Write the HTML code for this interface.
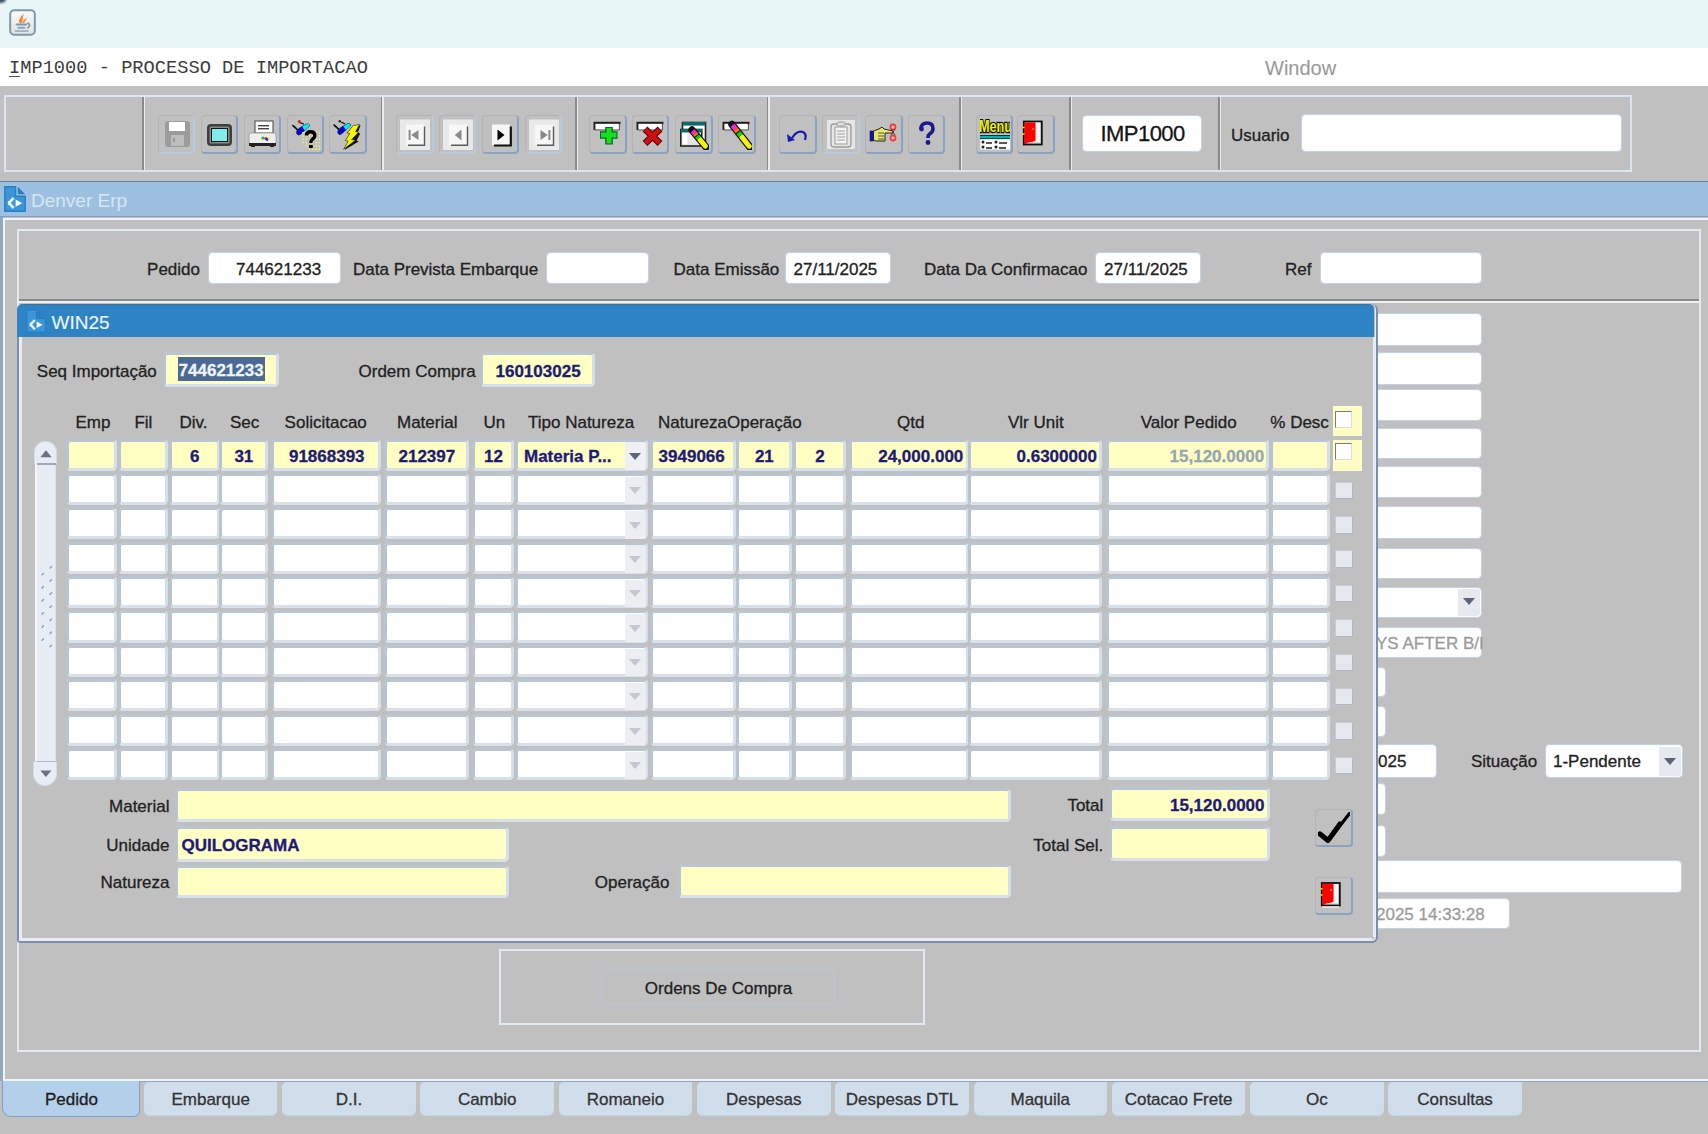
<!DOCTYPE html><html><head><meta charset="utf-8"><style>
html,body{margin:0;padding:0;width:1708px;height:1134px;overflow:hidden;background:#c0c0c0;position:relative}
.t{-webkit-text-stroke:0.3px currentColor}
</style></head><body>
<div style="position:absolute;left:0px;top:0px;width:1708px;height:48px;background:#e8f6f7"></div>
<div style="position:absolute;left:-5px;top:-5px;width:11px;height:7.5px;background:#3c5070;border-radius:50%;filter:blur(1px)"></div>
<svg style="position:absolute;left:9px;top:9px" width="27" height="27" viewBox="0 0 27 27">
<defs><linearGradient id="jg" x1="0" y1="0" x2="0" y2="1"><stop offset="0" stop-color="#fafafa"/><stop offset="1" stop-color="#e2e2e2"/></linearGradient></defs>
<rect x="1.2" y="1.2" width="24.6" height="24.6" rx="4" fill="url(#jg)" stroke="#7f97ab" stroke-width="2"/>
<path d="M11 14.5 C8.5 11 11.5 8 15 4.5 C13 8.5 14.5 10.5 12.5 14.5 Z" fill="#ee8a2e"/>
<path d="M13.5 14.3 C12.8 12 15.5 10.5 18 8.5 C17 11 17 12.5 14.5 14.3 Z" fill="#f09a40"/>
<rect x="6.5" y="14.6" width="11.7" height="1.9" rx="0.9" fill="#7d97ad"/>
<rect x="8.3" y="17.8" width="8.1" height="1.9" rx="0.9" fill="#8ca3b8"/>
<path d="M18.3 13.8 Q23 16.2 18.3 19.2" fill="none" stroke="#7d97ad" stroke-width="1.8"/>
<rect x="5.8" y="21.3" width="13.8" height="1.5" fill="#93a9bc"/>
</svg>
<div style="position:absolute;left:0px;top:48px;width:1708px;height:38px;background:#ffffff"></div>
<div class="t" style="position:absolute;left:9px;top:57.1px;height:22px;line-height:22px;font-family:'Liberation Mono', monospace;font-size:18.7px;color:#3c3c3c;font-weight:400;white-space:pre;-webkit-text-stroke:0">IMP1000 - PROCESSO DE IMPORTACAO</div>
<div style="position:absolute;left:9px;top:75.6px;width:10.5px;height:1.6px;background:#555"></div>
<div class="t" style="position:absolute;left:1265px;top:56.4px;height:24px;line-height:24px;font-family:'Liberation Sans', sans-serif;font-size:20px;color:#9a9a9a;font-weight:400;white-space:pre;-webkit-text-stroke:0.1px">Window</div>
<div style="position:absolute;left:4px;top:95px;width:1628px;height:77px;box-sizing:border-box;border:2px solid #dbe5ef;"></div>
<div style="position:absolute;left:142.3px;top:97px;width:1.6px;height:73px;background:#8a8a8a"></div>
<div style="position:absolute;left:143.9px;top:97px;width:1.4px;height:73px;background:#ececec"></div>
<div style="position:absolute;left:380.6px;top:97px;width:1.6px;height:73px;background:#8a8a8a"></div>
<div style="position:absolute;left:382.2px;top:97px;width:1.4px;height:73px;background:#ececec"></div>
<div style="position:absolute;left:575.0999999999999px;top:97px;width:1.6px;height:73px;background:#8a8a8a"></div>
<div style="position:absolute;left:576.6999999999999px;top:97px;width:1.4px;height:73px;background:#ececec"></div>
<div style="position:absolute;left:766.8px;top:97px;width:1.6px;height:73px;background:#8a8a8a"></div>
<div style="position:absolute;left:768.4px;top:97px;width:1.4px;height:73px;background:#ececec"></div>
<div style="position:absolute;left:959.0px;top:97px;width:1.6px;height:73px;background:#8a8a8a"></div>
<div style="position:absolute;left:960.6px;top:97px;width:1.4px;height:73px;background:#ececec"></div>
<div style="position:absolute;left:1069.1px;top:97px;width:1.6px;height:73px;background:#8a8a8a"></div>
<div style="position:absolute;left:1070.7px;top:97px;width:1.4px;height:73px;background:#ececec"></div>
<div style="position:absolute;left:1218.3999999999999px;top:97px;width:1.6px;height:73px;background:#8a8a8a"></div>
<div style="position:absolute;left:1220.0px;top:97px;width:1.4px;height:73px;background:#ececec"></div>
<div style="position:absolute;left:157.6px;top:114.5px;width:37.5px;height:39.5px;box-sizing:border-box;border-radius:4px;border-top:1.5px solid #b3b3b3;border-left:1.5px solid #b3b3b3;border-right:2px solid #b9c9dc;border-bottom:2px solid #b9c9dc;"></div>
<svg style="position:absolute;left:161.6px;top:118.5px" width="30" height="31" viewBox="0 0 30 31"><rect x="3" y="2" width="25" height="26" rx="3" fill="#9c9c9c"/>
<rect x="7" y="3" width="16" height="9" fill="#fff"/>
<rect x="9" y="16" width="13" height="11" fill="#bdbdbd"/>
<rect x="11" y="19" width="2" height="4" fill="#999"/></svg>
<div style="position:absolute;left:200.5px;top:114.5px;width:37.5px;height:39.5px;box-sizing:border-box;border-radius:4px;border-top:1.5px solid #b3b3b3;border-left:1.5px solid #b3b3b3;border-right:2px solid #8aa3c2;border-bottom:2px solid #8aa3c2;"></div>
<svg style="position:absolute;left:204.5px;top:118.5px" width="30" height="31" viewBox="0 0 30 31"><rect x="2" y="5" width="25" height="22" rx="4" fill="#3e3e3e"/>
<rect x="4.5" y="7.5" width="20" height="17" rx="1.5" fill="#8a8a8a"/>
<rect x="6" y="9" width="17" height="14" fill="#111"/>
<rect x="7" y="10" width="15" height="12" fill="#6ef6f6"/>
<path d="M7 13h15M7 16h15M7 19h15M10 10v12M13 10v12M16 10v12M19 10v12" stroke="#a8d8d8" stroke-width="0.6"/></svg>
<div style="position:absolute;left:243.5px;top:114.5px;width:37.5px;height:39.5px;box-sizing:border-box;border-radius:4px;border-top:1.5px solid #b3b3b3;border-left:1.5px solid #b3b3b3;border-right:2px solid #8aa3c2;border-bottom:2px solid #8aa3c2;"></div>
<svg style="position:absolute;left:247.5px;top:118.5px" width="30" height="31" viewBox="0 0 30 31"><rect x="7" y="2" width="18" height="12" fill="#fff" stroke="#444" stroke-width="1"/>
<rect x="10" y="6" width="11" height="1.4" fill="#444"/><rect x="10" y="9" width="11" height="1.4" fill="#444"/>
<rect x="1" y="14" width="27" height="11" rx="2" fill="#eeeeee" stroke="#999" stroke-width="0.8"/>
<rect x="1" y="24" width="27" height="3" fill="#222"/>
<rect x="3" y="26" width="4" height="2" fill="#222"/><rect x="22" y="26" width="4" height="2" fill="#222"/>
<circle cx="15" cy="19" r="1.6" fill="#19c319"/><circle cx="18" cy="19.5" r="1.6" fill="#e02020"/><circle cx="19" cy="20.5" r="1.4" fill="#2828ff"/><circle cx="21.5" cy="19.2" r="1.5" fill="#f0f060"/></svg>
<div style="position:absolute;left:286.5px;top:114.5px;width:37.5px;height:39.5px;box-sizing:border-box;border-radius:4px;border-top:1.5px solid #b3b3b3;border-left:1.5px solid #b3b3b3;border-right:2px solid #8aa3c2;border-bottom:2px solid #8aa3c2;"></div>
<svg style="position:absolute;left:290.5px;top:118.5px" width="30" height="31" viewBox="0 0 30 31"><g transform="translate(0.4,0.6)">
<path d="M1.6 6 L6.5 10.5" stroke="#111" stroke-width="1.8" stroke-linecap="round"/>
<path d="M8.5 3 L12.5 4.6" stroke="#222" stroke-width="1.4"/>
<path d="M5.6 14.2 C4.6 12.2 6.2 9.6 9 8 L14.6 4.8 C16.6 4 18.4 4.6 17.8 6.2 C17 7.8 15 9.4 12.6 11.2 L9.2 14.4 C7.6 15.6 6.4 15.6 5.6 14.2 Z" fill="#0000f0" stroke="#111" stroke-width="0.9"/>
<path d="M10.8 7 L14.6 4.8 C16.6 4 18.4 4.6 17.8 6.2 C17 7.8 15.2 9.2 13.2 10.8 Z" fill="#00f0f0"/>
</g><circle cx="8.4" cy="2.6" r="1.6" fill="#e02020"/>
<g fill="#f0f070"><circle cx="12.0" cy="13.6" r="0.85"/><circle cx="12.0" cy="16.9" r="0.85"/><circle cx="12.0" cy="20.2" r="0.85"/><circle cx="12.0" cy="23.5" r="0.85"/><circle cx="15.3" cy="13.6" r="0.85"/><circle cx="15.3" cy="16.9" r="0.85"/><circle cx="15.3" cy="20.2" r="0.85"/><circle cx="15.3" cy="23.5" r="0.85"/><circle cx="15.3" cy="26.8" r="0.85"/><circle cx="18.6" cy="13.6" r="0.85"/><circle cx="18.6" cy="16.9" r="0.85"/><circle cx="18.6" cy="20.2" r="0.85"/><circle cx="18.6" cy="23.5" r="0.85"/><circle cx="18.6" cy="26.8" r="0.85"/><circle cx="18.6" cy="30.1" r="0.85"/><circle cx="21.9" cy="13.6" r="0.85"/><circle cx="21.9" cy="16.9" r="0.85"/><circle cx="21.9" cy="20.2" r="0.85"/><circle cx="21.9" cy="23.5" r="0.85"/><circle cx="21.9" cy="26.8" r="0.85"/><circle cx="21.9" cy="30.1" r="0.85"/><circle cx="25.2" cy="13.6" r="0.85"/><circle cx="25.2" cy="16.9" r="0.85"/><circle cx="25.2" cy="20.2" r="0.85"/><circle cx="25.2" cy="23.5" r="0.85"/><circle cx="25.2" cy="26.8" r="0.85"/><circle cx="25.2" cy="30.1" r="0.85"/><circle cx="28.5" cy="13.6" r="0.85"/><circle cx="28.5" cy="16.9" r="0.85"/><circle cx="28.5" cy="20.2" r="0.85"/><circle cx="28.5" cy="23.5" r="0.85"/><circle cx="28.5" cy="26.8" r="0.85"/><circle cx="28.5" cy="30.1" r="0.85"/></g>
<path d="M15.5 16.6 Q15.5 12.8 19.6 12.8 Q23.8 12.8 23.8 16.6 Q23.8 19 21.2 20.4 Q19.8 21.4 19.8 24" fill="none" stroke="#000" stroke-width="3.4"/>
<rect x="18" y="26" width="3.8" height="3" fill="#000"/></svg>
<div style="position:absolute;left:329px;top:114.5px;width:37.5px;height:39.5px;box-sizing:border-box;border-radius:4px;border-top:1.5px solid #b3b3b3;border-left:1.5px solid #b3b3b3;border-right:2px solid #8aa3c2;border-bottom:2px solid #8aa3c2;"></div>
<svg style="position:absolute;left:333px;top:118.5px" width="30" height="31" viewBox="0 0 30 31"><g transform="translate(-0.4,0.2)">
<path d="M1.6 6 L6.5 10.5" stroke="#111" stroke-width="1.8" stroke-linecap="round"/>
<path d="M8.5 3 L12.5 4.6" stroke="#222" stroke-width="1.4"/>
<path d="M5.6 14.2 C4.6 12.2 6.2 9.6 9 8 L14.6 4.8 C16.6 4 18.4 4.6 17.8 6.2 C17 7.8 15 9.4 12.6 11.2 L9.2 14.4 C7.6 15.6 6.4 15.6 5.6 14.2 Z" fill="#0000f0" stroke="#111" stroke-width="0.9"/>
<path d="M10.8 7 L14.6 4.8 C16.6 4 18.4 4.6 17.8 6.2 C17 7.8 15.2 9.2 13.2 10.8 Z" fill="#00f0f0"/>
</g><circle cx="6.8" cy="2.2" r="1.2" fill="#222"/>
<path d="M27.6 6.2 L24.8 13.6 L27.2 14.4 L23.6 21.6 L25.6 22.4 L11.4 31 L17 22 L15 21.4 L19.2 14.6 L17.2 14 L20.5 7 Z" fill="#111"/><path d="M20.2 6.6 L26.6 5.4 L22.6 12.6 L25.6 13.2 L18.6 20.6 L22.4 21.2 L10.6 30.2 L15.2 22.2 L12.4 21.6 L16.8 14.6 L14 14 Z" fill="#f8f800" stroke="#333" stroke-width="0.7" stroke-linejoin="round"/></svg>
<div style="position:absolute;left:396px;top:114.5px;width:37.5px;height:39.5px;box-sizing:border-box;border-radius:4px;border-top:1.5px solid #b3b3b3;border-left:1.5px solid #b3b3b3;border-right:2px solid #b9c9dc;border-bottom:2px solid #b9c9dc;"></div>
<svg style="position:absolute;left:400px;top:118.5px" width="30" height="31" viewBox="0 0 30 31"><rect x="-0.5" y="0.5" width="31.5" height="31" fill="#e9e9e9"/><rect x="6" y="5.5" width="18" height="20.5" fill="#f7f7f7"/><path d="M8 26.3 H24.5 V7.5" stroke="#5a5a5a" stroke-width="1.4" fill="none"/><rect x="8.6" y="11" width="2" height="10" fill="#8a8a8a"/><path d="M18.5 11 L11.2 16 L18.5 21Z" fill="#8a8a8a"/></svg>
<div style="position:absolute;left:438.5px;top:114.5px;width:37.5px;height:39.5px;box-sizing:border-box;border-radius:4px;border-top:1.5px solid #b3b3b3;border-left:1.5px solid #b3b3b3;border-right:2px solid #b9c9dc;border-bottom:2px solid #b9c9dc;"></div>
<svg style="position:absolute;left:442.5px;top:118.5px" width="30" height="31" viewBox="0 0 30 31"><rect x="-0.5" y="0.5" width="31.5" height="31" fill="#e9e9e9"/><rect x="6" y="5.5" width="18" height="20.5" fill="#f7f7f7"/><path d="M8 26.3 H24.5 V7.5" stroke="#5a5a5a" stroke-width="1.4" fill="none"/><path d="M18.5 10.5 L11.8 16 L18.5 21.5Z" fill="#8a8a8a"/></svg>
<div style="position:absolute;left:481.5px;top:114.5px;width:37.5px;height:39.5px;box-sizing:border-box;border-radius:4px;border-top:1.5px solid #b3b3b3;border-left:1.5px solid #b3b3b3;border-right:2px solid #8aa3c2;border-bottom:2px solid #8aa3c2;"></div>
<svg style="position:absolute;left:485.5px;top:118.5px" width="30" height="31" viewBox="0 0 30 31"><rect x="6" y="5.5" width="18" height="20.5" fill="#f7f7f7"/><path d="M8 26.5 H24.8 V7.5" stroke="#111" stroke-width="2.2" fill="none"/><path d="M11.5 10.5 L18.5 16 L11.5 21.5Z" fill="#000"/></svg>
<div style="position:absolute;left:524.5px;top:114.5px;width:37.5px;height:39.5px;box-sizing:border-box;border-radius:4px;border-top:1.5px solid #b3b3b3;border-left:1.5px solid #b3b3b3;border-right:2px solid #b9c9dc;border-bottom:2px solid #b9c9dc;"></div>
<svg style="position:absolute;left:528.5px;top:118.5px" width="30" height="31" viewBox="0 0 30 31"><rect x="-0.5" y="0.5" width="31.5" height="31" fill="#e9e9e9"/><rect x="6" y="5.5" width="18" height="20.5" fill="#f7f7f7"/><path d="M8 26.3 H24.5 V7.5" stroke="#5a5a5a" stroke-width="1.4" fill="none"/><path d="M11.5 11 L18.8 16 L11.5 21Z" fill="#8a8a8a"/><rect x="19.4" y="11" width="2" height="10" fill="#8a8a8a"/></svg>
<div style="position:absolute;left:589px;top:114.5px;width:37.5px;height:39.5px;box-sizing:border-box;border-radius:4px;border-top:1.5px solid #b3b3b3;border-left:1.5px solid #b3b3b3;border-right:2px solid #8aa3c2;border-bottom:2px solid #8aa3c2;"></div>
<svg style="position:absolute;left:593px;top:118.5px" width="30" height="31" viewBox="0 0 30 31"><path d="M1.5 11 V3.8 H26.5 V5.2" fill="none" stroke="#222" stroke-width="2"/><rect x="2.6" y="5" width="23" height="5.4" fill="#fff"/><path d="M2 11 H26.5 V4.5" fill="none" stroke="#555" stroke-width="0.9"/><path d="M16 8 V25.5 M7 16 H24.5" stroke="#063" stroke-width="7.6"/><path d="M16 9 V24.5 M8 16 H23.5" stroke="#18e018" stroke-width="5"/></svg>
<div style="position:absolute;left:631.5px;top:114.5px;width:37.5px;height:39.5px;box-sizing:border-box;border-radius:4px;border-top:1.5px solid #b3b3b3;border-left:1.5px solid #b3b3b3;border-right:2px solid #8aa3c2;border-bottom:2px solid #8aa3c2;"></div>
<svg style="position:absolute;left:635.5px;top:118.5px" width="30" height="31" viewBox="0 0 30 31"><path d="M1.5 11 V3.8 H26.5 V5.2" fill="none" stroke="#222" stroke-width="2"/><rect x="2.6" y="5" width="23" height="5.4" fill="#fff"/><path d="M2 11 H26.5 V4.5" fill="none" stroke="#555" stroke-width="0.9"/><path d="M9 10 L24 24.5 M24 10 L9 24.5" stroke="#500" stroke-width="6.8"/><path d="M9.5 10.5 L23.5 24 M23.5 10.5 L9.5 24" stroke="#d01010" stroke-width="4.6"/></svg>
<div style="position:absolute;left:675px;top:114.5px;width:37.5px;height:39.5px;box-sizing:border-box;border-radius:4px;border-top:1.5px solid #b3b3b3;border-left:1.5px solid #b3b3b3;border-right:2px solid #8aa3c2;border-bottom:2px solid #8aa3c2;"></div>
<svg style="position:absolute;left:679px;top:118.5px" width="30" height="31" viewBox="0 0 30 31"><rect x="3.5" y="3.5" width="23" height="22" fill="#fff" stroke="#222" stroke-width="1.6"/><rect x="3.5" y="3" width="23" height="3.6" fill="#0b6a6a"/><rect x="1.8" y="10.5" width="21" height="16.5" fill="#e6e6e6" stroke="#222" stroke-width="1.6"/><rect x="1.8" y="10" width="21" height="3.4" fill="#0b6a6a"/><rect x="3.5" y="14" width="5" height="11" fill="#fff"/><path d="M13.0 11.0 L27.0 28.0" stroke="#111" stroke-width="7.4" stroke-linecap="round"/><path d="M20.7 20.4 L26.4 27.2" stroke="#f4f410" stroke-width="5" stroke-linecap="round"/><path d="M13.6 11.8 L15.8 14.4" stroke="#ff20e0" stroke-width="5"/><path d="M15.8 14.4 L17.5 16.4" stroke="#ff7010" stroke-width="5"/><path d="M18.0 17.1 L20.0 19.5" stroke="#10d010" stroke-width="5"/></svg>
<div style="position:absolute;left:718px;top:114.5px;width:37.5px;height:39.5px;box-sizing:border-box;border-radius:4px;border-top:1.5px solid #b3b3b3;border-left:1.5px solid #b3b3b3;border-right:2px solid #8aa3c2;border-bottom:2px solid #8aa3c2;"></div>
<svg style="position:absolute;left:722px;top:118.5px" width="30" height="31" viewBox="0 0 30 31"><path d="M1.5 11 V3.8 H26.5 V5.2" fill="none" stroke="#222" stroke-width="2"/><rect x="2.6" y="5" width="23" height="5.4" fill="#fff"/><path d="M2 11 H26.5 V4.5" fill="none" stroke="#555" stroke-width="0.9"/><path d="M10.0 5.5 L27.8 28.0" stroke="#111" stroke-width="7.4" stroke-linecap="round"/><path d="M19.8 17.9 L27.2 27.2" stroke="#f4f410" stroke-width="5" stroke-linecap="round"/><path d="M10.6 6.3 L13.6 10.0" stroke="#ff20e0" stroke-width="5"/><path d="M13.6 10.0 L15.7 12.7" stroke="#ff7010" stroke-width="5"/><path d="M16.4 13.6 L18.9 16.8" stroke="#10d010" stroke-width="5"/></svg>
<div style="position:absolute;left:779px;top:114.5px;width:37.5px;height:39.5px;box-sizing:border-box;border-radius:4px;border-top:1.5px solid #b3b3b3;border-left:1.5px solid #b3b3b3;border-right:2px solid #8aa3c2;border-bottom:2px solid #8aa3c2;"></div>
<svg style="position:absolute;left:783px;top:118.5px" width="30" height="31" viewBox="0 0 30 31"><path d="M9 19 Q14 11 20 13 Q24 15 22 21" fill="none" stroke="#1a1ab0" stroke-width="2.2"/><path d="M4 15 L5 23 L12 21 Z" fill="#1a1ab0"/></svg>
<div style="position:absolute;left:822px;top:114.5px;width:37.5px;height:39.5px;box-sizing:border-box;border-radius:4px;border-top:1.5px solid #b3b3b3;border-left:1.5px solid #b3b3b3;border-right:2px solid #b9c9dc;border-bottom:2px solid #b9c9dc;"></div>
<svg style="position:absolute;left:826px;top:118.5px" width="30" height="31" viewBox="0 0 30 31"><rect x="1" y="1" width="28" height="29" fill="#e6e6e6"/><rect x="5" y="5" width="20" height="23" rx="3" fill="none" stroke="#9a9a9a" stroke-width="1.3"/><rect x="9" y="8" width="12" height="17" fill="#f2f2f2" stroke="#9a9a9a" stroke-width="1"/><rect x="11" y="3" width="8" height="4" rx="1.5" fill="#ddd" stroke="#9a9a9a" stroke-width="1"/><path d="M11 12h8M11 15h8M11 18h8M11 21h8" stroke="#a0a0a0" stroke-width="1"/></svg>
<div style="position:absolute;left:865px;top:114.5px;width:37.5px;height:39.5px;box-sizing:border-box;border-radius:4px;border-top:1.5px solid #b3b3b3;border-left:1.5px solid #b3b3b3;border-right:2px solid #8aa3c2;border-bottom:2px solid #8aa3c2;"></div>
<svg style="position:absolute;left:869px;top:118.5px" width="30" height="31" viewBox="0 0 30 31"><rect x="1" y="12" width="3.5" height="10" fill="#1010d0" stroke="#111" stroke-width=".6"/><path d="M4.5 12 L10 10 L13 8 L15 10 L24 12 L24 14 L16 14 L16 22 L7 22 L4.5 21Z" fill="#e6e670" stroke="#222" stroke-width="1"/><path d="M9 14h6M9 17h6M9 20h6" stroke="#333" stroke-width=".8"/><circle cx="24" cy="8" r="2.6" fill="none" stroke="#ff3030" stroke-width="1.6"/><circle cx="24" cy="19" r="2.6" fill="none" stroke="#ff3030" stroke-width="1.6"/><path d="M22 10 L26 16 M26 10 L22 16" stroke="#444" stroke-width="1"/></svg>
<div style="position:absolute;left:907.5px;top:114.5px;width:37.5px;height:39.5px;box-sizing:border-box;border-radius:4px;border-top:1.5px solid #b3b3b3;border-left:1.5px solid #b3b3b3;border-right:2px solid #8aa3c2;border-bottom:2px solid #8aa3c2;"></div>
<svg style="position:absolute;left:911.5px;top:118.5px" width="30" height="31" viewBox="0 0 30 31"><path d="M9 10 Q9 4 15 4 Q21 4 21 9.5 Q21 13 17.5 15 Q16 16 16 19" fill="none" stroke="#1a1a8e" stroke-width="3.6"/><circle cx="9.5" cy="10" r="2.4" fill="#1a1a8e"/><circle cx="16" cy="23.5" r="2.4" fill="#1a1a8e"/></svg>
<div style="position:absolute;left:975.5px;top:114.5px;width:37.5px;height:39.5px;box-sizing:border-box;border-radius:4px;border-top:1.5px solid #b3b3b3;border-left:1.5px solid #b3b3b3;border-right:2px solid #8aa3c2;border-bottom:2px solid #8aa3c2;"></div>
<svg style="position:absolute;left:979.5px;top:118.5px" width="30" height="31" viewBox="0 0 30 31"><text x="-1" y="13.2" font-family="Liberation Sans" font-weight="700" font-size="17" fill="#f0f000" stroke="#111" stroke-width="2.4" paint-order="stroke" textLength="33" lengthAdjust="spacingAndGlyphs">Menu</text><rect x="-1" y="16" width="31" height="4" fill="#0a3838"/><rect x="-1" y="17" width="31" height="2.2" fill="#10b0b0"/><rect x="-1" y="20.5" width="31" height="10" fill="#fff"/><path d="M-0.5 20 V31" stroke="#222" stroke-width="1.2"/><circle cx="3" cy="23" r="1.5" fill="#222"/><circle cx="16" cy="23" r="1.5" fill="#222"/><circle cx="3" cy="28" r="1.5" fill="#222"/><circle cx="16" cy="28" r="1.5" fill="#222"/><path d="M6 24h6M19 24h8M6 29h6M19 29h7" stroke="#222" stroke-width="1.3"/></svg>
<div style="position:absolute;left:1017px;top:114.5px;width:37.5px;height:39.5px;box-sizing:border-box;border-radius:4px;border-top:1.5px solid #b3b3b3;border-left:1.5px solid #b3b3b3;border-right:2px solid #8aa3c2;border-bottom:2px solid #8aa3c2;"></div>
<svg style="position:absolute;left:1021px;top:118.5px" width="30" height="31" viewBox="0 0 30 31"><rect x="2.8" y="2.5" width="18" height="23" fill="#d8d8d8" stroke="#111" stroke-width="1.8"/><rect x="14.5" y="3.5" width="4.5" height="19.5" fill="#f4f4f4"/><path d="M3.5 3.4 H14.5 V21.5 L11 23 L7 23.5 L5 25 H3.5Z" fill="#ff0000"/><circle cx="12" cy="10" r="1" fill="#ff9900"/><path d="M1.5 8.5 h2 M1.5 15 h2" stroke="#ee0" stroke-width="1.4"/></svg>
<div style="position:absolute;left:1082.2px;top:115.2px;width:120.1px;height:36.6px;box-sizing:border-box;background:#ffffff;border:1.7px solid #c3d1e4;border-radius:4.5px;box-shadow:inset 0 0 1px #dfe8f2"></div>
<div class="t" style="position:absolute;left:1100.5px;top:121.1px;height:26px;line-height:26px;font-family:'Liberation Sans', sans-serif;font-size:22px;color:#151515;font-weight:400;white-space:pre;letter-spacing:-0.55px">IMP1000</div>
<div class="t" style="position:absolute;left:1231px;top:125.8px;height:20px;line-height:20px;font-family:'Liberation Sans', sans-serif;font-size:17px;color:#222;font-weight:400;white-space:pre;">Usuario</div>
<div style="position:absolute;left:1300.7px;top:114.2px;width:321.6px;height:37.6px;box-sizing:border-box;background:#ffffff;border:1.7px solid #c3d1e4;border-radius:4.5px;box-shadow:inset 0 0 1px #dfe8f2"></div>
<div style="position:absolute;left:0px;top:181px;width:1708px;height:1.6px;background:#5f83ad"></div>
<div style="position:absolute;left:0px;top:182px;width:1708px;height:34px;background:#9dc0e0"></div>
<div style="position:absolute;left:0px;top:216px;width:1708px;height:1px;background:#7e9fc4"></div>
<svg style="position:absolute;left:4px;top:186px" width="22.0" height="26.0" viewBox="0 0 22 26">
<path d="M0.8 0.8 H11.6 V10.2 H21.2 V25.2 H0.8 Z" fill="#3a96d8" stroke="#2a7ec0" stroke-width="1.4" stroke-linejoin="round"/>
<path d="M13.8 0.8 L21.2 8.2 H13.8 Z" fill="#2a7fc2"/>
<path d="M9.6 12 L5 17 L9.6 22" fill="none" stroke="#e8f2fa" stroke-width="2.6" stroke-linejoin="round"/>
<path d="M4 15.5 h2 M4 18.5 h2" stroke="#e8f2fa" stroke-width="1.2"/>
<path d="M11.6 13.6 L18.2 17.2 L11.6 20.8 Z" fill="#ffffff"/>
</svg>
<div class="t" style="position:absolute;left:31px;top:188.6px;height:23px;line-height:23px;font-family:'Liberation Sans', sans-serif;font-size:19px;color:#d6e6f2;font-weight:400;white-space:pre;-webkit-text-stroke:0">Denver Erp</div>
<div style="position:absolute;left:0px;top:217px;width:2.6px;height:864px;background:#95a7bd"></div>
<div style="position:absolute;left:3px;top:218px;width:1705px;height:2px;background:#eef3f8"></div>
<div style="position:absolute;left:3.3px;top:218px;width:2.2px;height:862px;background:#eef3f8"></div>
<div style="position:absolute;left:17px;top:229px;width:1684px;height:823px;box-sizing:border-box;border:2px solid #e2e9f1;"></div>
<div style="position:absolute;left:19px;top:299px;width:1680px;height:1.5px;background:#8a8a8a"></div>
<div style="position:absolute;left:19px;top:300.8px;width:1680px;height:2.6px;background:#f0f0f0"></div>
<div class="t" style="position:absolute;left:-400px;width:600px;text-align:right;top:259.8px;height:20px;line-height:20px;font-family:'Liberation Sans', sans-serif;font-size:17px;color:#222;font-weight:400;white-space:pre;">Pedido</div>
<div style="position:absolute;left:207.7px;top:251.7px;width:133.1px;height:32.1px;box-sizing:border-box;background:#ffffff;border:1.7px solid #c3d1e4;border-radius:4.5px;box-shadow:inset 0 0 1px #dfe8f2"></div>
<div class="t" style="position:absolute;left:236px;top:259.8px;height:20px;line-height:20px;font-family:'Liberation Sans', sans-serif;font-size:17px;color:#222;font-weight:400;white-space:pre;">744621233</div>
<div class="t" style="position:absolute;left:353px;top:259.8px;height:20px;line-height:20px;font-family:'Liberation Sans', sans-serif;font-size:17px;color:#222;font-weight:400;white-space:pre;">Data Prevista Embarque</div>
<div style="position:absolute;left:545.7px;top:251.7px;width:103.6px;height:32.1px;box-sizing:border-box;background:#ffffff;border:1.7px solid #c3d1e4;border-radius:4.5px;box-shadow:inset 0 0 1px #dfe8f2"></div>
<div class="t" style="position:absolute;left:673.5px;top:259.8px;height:20px;line-height:20px;font-family:'Liberation Sans', sans-serif;font-size:17px;color:#222;font-weight:400;white-space:pre;">Data Emissão</div>
<div style="position:absolute;left:785.2px;top:251.7px;width:105.6px;height:32.1px;box-sizing:border-box;background:#ffffff;border:1.7px solid #c3d1e4;border-radius:4.5px;box-shadow:inset 0 0 1px #dfe8f2"></div>
<div class="t" style="position:absolute;left:793.5px;top:259.8px;height:20px;line-height:20px;font-family:'Liberation Sans', sans-serif;font-size:17px;color:#222;font-weight:400;white-space:pre;">27/11/2025</div>
<div class="t" style="position:absolute;left:924px;top:259.8px;height:20px;line-height:20px;font-family:'Liberation Sans', sans-serif;font-size:17px;color:#222;font-weight:400;white-space:pre;">Data Da Confirmacao</div>
<div style="position:absolute;left:1095.2px;top:251.7px;width:105.6px;height:32.1px;box-sizing:border-box;background:#ffffff;border:1.7px solid #c3d1e4;border-radius:4.5px;box-shadow:inset 0 0 1px #dfe8f2"></div>
<div class="t" style="position:absolute;left:1104px;top:259.8px;height:20px;line-height:20px;font-family:'Liberation Sans', sans-serif;font-size:17px;color:#222;font-weight:400;white-space:pre;">27/11/2025</div>
<div class="t" style="position:absolute;left:1285px;top:259.8px;height:20px;line-height:20px;font-family:'Liberation Sans', sans-serif;font-size:17px;color:#222;font-weight:400;white-space:pre;">Ref</div>
<div style="position:absolute;left:1320.2px;top:251.7px;width:162.1px;height:32.1px;box-sizing:border-box;background:#ffffff;border:1.7px solid #c3d1e4;border-radius:4.5px;box-shadow:inset 0 0 1px #dfe8f2"></div>
<div style="position:absolute;left:1339.7px;top:312.7px;width:142.6px;height:33.6px;box-sizing:border-box;background:#ffffff;border:1.7px solid #c3d1e4;border-radius:4.5px;box-shadow:inset 0 0 1px #dfe8f2"></div>
<div style="position:absolute;left:1339.7px;top:351.7px;width:142.6px;height:33.6px;box-sizing:border-box;background:#ffffff;border:1.7px solid #c3d1e4;border-radius:4.5px;box-shadow:inset 0 0 1px #dfe8f2"></div>
<div style="position:absolute;left:1339.7px;top:388.7px;width:142.6px;height:32.1px;box-sizing:border-box;background:#ffffff;border:1.7px solid #c3d1e4;border-radius:4.5px;box-shadow:inset 0 0 1px #dfe8f2"></div>
<div style="position:absolute;left:1339.7px;top:427.7px;width:142.6px;height:31.6px;box-sizing:border-box;background:#ffffff;border:1.7px solid #c3d1e4;border-radius:4.5px;box-shadow:inset 0 0 1px #dfe8f2"></div>
<div style="position:absolute;left:1339.7px;top:465.7px;width:142.6px;height:32.6px;box-sizing:border-box;background:#ffffff;border:1.7px solid #c3d1e4;border-radius:4.5px;box-shadow:inset 0 0 1px #dfe8f2"></div>
<div style="position:absolute;left:1339.7px;top:505.7px;width:142.6px;height:33.6px;box-sizing:border-box;background:#ffffff;border:1.7px solid #c3d1e4;border-radius:4.5px;box-shadow:inset 0 0 1px #dfe8f2"></div>
<div style="position:absolute;left:1339.7px;top:547.7px;width:142.6px;height:31.6px;box-sizing:border-box;background:#ffffff;border:1.7px solid #c3d1e4;border-radius:4.5px;box-shadow:inset 0 0 1px #dfe8f2"></div>
<div style="position:absolute;left:1339.7px;top:586.7px;width:142.6px;height:31.1px;box-sizing:border-box;background:#ffffff;border:1.7px solid #c3d1e4;border-radius:4.5px;box-shadow:inset 0 0 1px #dfe8f2"></div>
<div style="position:absolute;left:1458px;top:589px;width:22px;height:26.5px;background:#e6e9ef;border-radius:0 3px 3px 0"></div>
<svg style="position:absolute;left:1462px;top:597px" width="14" height="9"><path d="M1 1 H13 L7 8Z" fill="#5c6478"/></svg>
<div style="position:absolute;left:1339.7px;top:626.7px;width:142.6px;height:31.6px;box-sizing:border-box;background:#ffffff;border:1.7px solid #c3d1e4;border-radius:4.5px;box-shadow:inset 0 0 1px #dfe8f2"></div>
<div class="t" style="position:absolute;left:1376px;top:634.3px;height:20px;line-height:20px;font-family:'Liberation Sans', sans-serif;font-size:17px;color:#9a9a9a;font-weight:400;white-space:pre;">YS AFTER B/I</div>
<div style="position:absolute;left:1339.7px;top:666.7px;width:46.6px;height:30.1px;box-sizing:border-box;background:#ffffff;border:1.7px solid #c3d1e4;border-radius:4.5px;box-shadow:inset 0 0 1px #dfe8f2"></div>
<div style="position:absolute;left:1339.7px;top:705.7px;width:46.6px;height:31.6px;box-sizing:border-box;background:#ffffff;border:1.7px solid #c3d1e4;border-radius:4.5px;box-shadow:inset 0 0 1px #dfe8f2"></div>
<div style="position:absolute;left:1339.7px;top:744.0px;width:97.6px;height:33.6px;box-sizing:border-box;background:#ffffff;border:1.7px solid #c3d1e4;border-radius:4.5px;box-shadow:inset 0 0 1px #dfe8f2"></div>
<div class="t" style="position:absolute;left:1378px;top:752.1px;height:20px;line-height:20px;font-family:'Liberation Sans', sans-serif;font-size:17px;color:#222;font-weight:400;white-space:pre;">025</div>
<div class="t" style="position:absolute;left:1471px;top:752.1px;height:20px;line-height:20px;font-family:'Liberation Sans', sans-serif;font-size:17px;color:#222;font-weight:400;white-space:pre;">Situação</div>
<div style="position:absolute;left:1545.2px;top:744.0px;width:138.1px;height:33.6px;box-sizing:border-box;background:#ffffff;border:1.7px solid #c3d1e4;border-radius:4.5px;box-shadow:inset 0 0 1px #dfe8f2"></div>
<div class="t" style="position:absolute;left:1553px;top:752.1px;height:20px;line-height:20px;font-family:'Liberation Sans', sans-serif;font-size:17px;color:#222;font-weight:400;white-space:pre;">1-Pendente</div>
<div style="position:absolute;left:1658.5px;top:747px;width:22.5px;height:28.5px;background:#e6e9ef;border-radius:0 3px 3px 0"></div>
<svg style="position:absolute;left:1663px;top:757px" width="14" height="9"><path d="M1 1 H13 L7 8Z" fill="#5c6478"/></svg>
<div style="position:absolute;left:1339.7px;top:783.2px;width:46.6px;height:32.1px;box-sizing:border-box;background:#ffffff;border:1.7px solid #c3d1e4;border-radius:4.5px;box-shadow:inset 0 0 1px #dfe8f2"></div>
<div style="position:absolute;left:1339.7px;top:824.7px;width:46.6px;height:32.1px;box-sizing:border-box;background:#ffffff;border:1.7px solid #c3d1e4;border-radius:4.5px;box-shadow:inset 0 0 1px #dfe8f2"></div>
<div style="position:absolute;left:1339.7px;top:859.7px;width:342.6px;height:33.6px;box-sizing:border-box;background:#ffffff;border:1.7px solid #c3d1e4;border-radius:4.5px;box-shadow:inset 0 0 1px #dfe8f2"></div>
<div style="position:absolute;left:1339.7px;top:897.7px;width:170.6px;height:31.1px;box-sizing:border-box;background:#ffffff;border:1.7px solid #c3d1e4;border-radius:4.5px;box-shadow:inset 0 0 1px #dfe8f2"></div>
<div class="t" style="position:absolute;left:1376px;top:904.8px;height:20px;line-height:20px;font-family:'Liberation Sans', sans-serif;font-size:17px;color:#9c9c9c;font-weight:400;white-space:pre;">2025 14:33:28</div>
<div style="position:absolute;left:499px;top:949px;width:426px;height:75.5px;box-sizing:border-box;border:2px solid #e0e8f2;"></div>
<div style="position:absolute;left:601px;top:969px;width:234px;height:36px;box-sizing:border-box;border:1.5px solid #b8c8da;border-radius:3px;"></div>
<div class="t" style="position:absolute;left:644.8px;top:978.8px;height:20px;line-height:20px;font-family:'Liberation Sans', sans-serif;font-size:17px;color:#222;font-weight:400;white-space:pre;">Ordens De Compra</div>
<div style="position:absolute;left:3px;top:1078.6px;width:1705px;height:2px;background:#eef3f8"></div>
<div style="position:absolute;left:139px;top:1080.6px;width:1569px;height:1.9px;background:#8ea7c6"></div>
<div style="position:absolute;left:1.5px;top:1080.5px;width:138px;height:36px;box-sizing:border-box;background:#b3cfe9;border:1.6px solid #7f9fc4;border-top:none;border-radius:0 0 6px 9px;"></div>
<div class="t" style="position:absolute;left:-228.5px;width:600px;text-align:center;top:1090.3px;height:20px;line-height:20px;font-family:'Liberation Sans', sans-serif;font-size:17px;color:#1c1c1c;font-weight:400;white-space:pre;">Pedido</div>
<div style="position:absolute;left:143.9px;top:1082.4px;width:133.5px;height:33.8px;box-sizing:border-box;background:#d0ddeb;border-radius:5px 0 6px 6px;box-shadow:inset 0 -1px 0 #c4d2e2"></div>
<div class="t" style="position:absolute;left:-89.35px;width:600px;text-align:center;top:1090.1px;height:20px;line-height:20px;font-family:'Liberation Sans', sans-serif;font-size:17px;color:#333;font-weight:400;white-space:pre;">Embarque</div>
<div style="position:absolute;left:282.2px;top:1082.4px;width:133.5px;height:33.8px;box-sizing:border-box;background:#d0ddeb;border-radius:5px 0 6px 6px;box-shadow:inset 0 -1px 0 #c4d2e2"></div>
<div class="t" style="position:absolute;left:48.920000000000016px;width:600px;text-align:center;top:1090.1px;height:20px;line-height:20px;font-family:'Liberation Sans', sans-serif;font-size:17px;color:#333;font-weight:400;white-space:pre;">D.I.</div>
<div style="position:absolute;left:420.4px;top:1082.4px;width:133.5px;height:33.8px;box-sizing:border-box;background:#d0ddeb;border-radius:5px 0 6px 6px;box-shadow:inset 0 -1px 0 #c4d2e2"></div>
<div class="t" style="position:absolute;left:187.19000000000005px;width:600px;text-align:center;top:1090.1px;height:20px;line-height:20px;font-family:'Liberation Sans', sans-serif;font-size:17px;color:#333;font-weight:400;white-space:pre;">Cambio</div>
<div style="position:absolute;left:558.7px;top:1082.4px;width:133.5px;height:33.8px;box-sizing:border-box;background:#d0ddeb;border-radius:5px 0 6px 6px;box-shadow:inset 0 -1px 0 #c4d2e2"></div>
<div class="t" style="position:absolute;left:325.46000000000004px;width:600px;text-align:center;top:1090.1px;height:20px;line-height:20px;font-family:'Liberation Sans', sans-serif;font-size:17px;color:#333;font-weight:400;white-space:pre;">Romaneio</div>
<div style="position:absolute;left:697.0px;top:1082.4px;width:133.5px;height:33.8px;box-sizing:border-box;background:#d0ddeb;border-radius:5px 0 6px 6px;box-shadow:inset 0 -1px 0 #c4d2e2"></div>
<div class="t" style="position:absolute;left:463.73px;width:600px;text-align:center;top:1090.1px;height:20px;line-height:20px;font-family:'Liberation Sans', sans-serif;font-size:17px;color:#333;font-weight:400;white-space:pre;">Despesas</div>
<div style="position:absolute;left:835.2px;top:1082.4px;width:133.5px;height:33.8px;box-sizing:border-box;background:#d0ddeb;border-radius:5px 0 6px 6px;box-shadow:inset 0 -1px 0 #c4d2e2"></div>
<div class="t" style="position:absolute;left:602.0px;width:600px;text-align:center;top:1090.1px;height:20px;line-height:20px;font-family:'Liberation Sans', sans-serif;font-size:17px;color:#333;font-weight:400;white-space:pre;">Despesas DTL</div>
<div style="position:absolute;left:973.5px;top:1082.4px;width:133.5px;height:33.8px;box-sizing:border-box;background:#d0ddeb;border-radius:5px 0 6px 6px;box-shadow:inset 0 -1px 0 #c4d2e2"></div>
<div class="t" style="position:absolute;left:740.27px;width:600px;text-align:center;top:1090.1px;height:20px;line-height:20px;font-family:'Liberation Sans', sans-serif;font-size:17px;color:#333;font-weight:400;white-space:pre;">Maquila</div>
<div style="position:absolute;left:1111.8px;top:1082.4px;width:133.5px;height:33.8px;box-sizing:border-box;background:#d0ddeb;border-radius:5px 0 6px 6px;box-shadow:inset 0 -1px 0 #c4d2e2"></div>
<div class="t" style="position:absolute;left:878.5400000000002px;width:600px;text-align:center;top:1090.1px;height:20px;line-height:20px;font-family:'Liberation Sans', sans-serif;font-size:17px;color:#333;font-weight:400;white-space:pre;">Cotacao Frete</div>
<div style="position:absolute;left:1250.1px;top:1082.4px;width:133.5px;height:33.8px;box-sizing:border-box;background:#d0ddeb;border-radius:5px 0 6px 6px;box-shadow:inset 0 -1px 0 #c4d2e2"></div>
<div class="t" style="position:absolute;left:1016.8100000000002px;width:600px;text-align:center;top:1090.1px;height:20px;line-height:20px;font-family:'Liberation Sans', sans-serif;font-size:17px;color:#333;font-weight:400;white-space:pre;">Oc</div>
<div style="position:absolute;left:1388.3px;top:1082.4px;width:133.5px;height:33.8px;box-sizing:border-box;background:#d0ddeb;border-radius:5px 0 6px 6px;box-shadow:inset 0 -1px 0 #c4d2e2"></div>
<div class="t" style="position:absolute;left:1155.0800000000002px;width:600px;text-align:center;top:1090.1px;height:20px;line-height:20px;font-family:'Liberation Sans', sans-serif;font-size:17px;color:#333;font-weight:400;white-space:pre;">Consultas</div>
<div style="position:absolute;left:16.8px;top:304px;width:1361.4px;height:639px;box-sizing:border-box;background:#c0c0c0;border-left:2.2px solid #7a8fae;border-right:2.2px solid #7a8fae;border-bottom:2.2px solid #7a8fae;border-radius:6px 6px 6px 3px;box-shadow:inset -1px -1px 0 #e8eef5"></div>
<div style="position:absolute;left:17px;top:303.6px;width:1357px;height:33.8px;box-sizing:border-box;background:#2e83c4;border-top:1.2px solid #3d6f9f;border-radius:6px 5px 0 0"></div>
<svg style="position:absolute;left:26px;top:309px" width="20.2" height="23.9" viewBox="0 0 22 26">
<path d="M0.8 0.8 H11.6 V10.2 H21.2 V25.2 H0.8 Z" fill="#3a96d8" stroke="#2a7ec0" stroke-width="1.4" stroke-linejoin="round"/>
<path d="M13.8 0.8 L21.2 8.2 H13.8 Z" fill="#2a7fc2"/>
<path d="M9.6 12 L5 17 L9.6 22" fill="none" stroke="#e8f2fa" stroke-width="2.6" stroke-linejoin="round"/>
<path d="M4 15.5 h2 M4 18.5 h2" stroke="#e8f2fa" stroke-width="1.2"/>
<path d="M11.6 13.6 L18.2 17.2 L11.6 20.8 Z" fill="#ffffff"/>
</svg>
<div class="t" style="position:absolute;left:51.6px;top:310.6px;height:23px;line-height:23px;font-family:'Liberation Sans', sans-serif;font-size:19px;color:#eaf4fa;font-weight:400;white-space:pre;-webkit-text-stroke:0.15px">WIN25</div>
<div style="position:absolute;left:19.2px;top:337px;width:2.8px;height:604px;background:#e8ecf2"></div>
<div style="position:absolute;left:1372.6px;top:337px;width:2.2px;height:600px;background:#e6ecf2"></div>
<div style="position:absolute;left:19.2px;top:938px;width:1353px;height:2.6px;background:#e8ecf2"></div>
<div class="t" style="position:absolute;left:36.8px;top:361.8px;height:20px;line-height:20px;font-family:'Liberation Sans', sans-serif;font-size:17px;color:#222;font-weight:400;white-space:pre;">Seq Importação</div>
<div style="position:absolute;left:163.4px;top:352.2px;width:116.0px;height:35.1px;box-sizing:border-box;background:#ffffc4;border-style:solid;border-width:3px 3px 3.3px 3.6px;border-color:#bac5d2 #d5dee9 #d8e1eb #b9c4d1;border-radius:4.5px;"></div>
<div style="position:absolute;left:178.2px;top:357.2px;width:86.4px;height:23.6px;background:#4b6994"></div>
<div class="t" style="position:absolute;left:178.6px;top:361.1px;height:20px;line-height:20px;font-family:'Liberation Sans', sans-serif;font-size:17px;color:#eef4fa;font-weight:700;white-space:pre;clip-path:inset(0 0 0 0)">744621233</div>
<div class="t" style="position:absolute;left:358.5px;top:361.8px;height:20px;line-height:20px;font-family:'Liberation Sans', sans-serif;font-size:17px;color:#222;font-weight:400;white-space:pre;">Ordem Compra</div>
<div style="position:absolute;left:479.9px;top:352.2px;width:115.5px;height:35.1px;box-sizing:border-box;background:#ffffc4;border-style:solid;border-width:3px 3px 3.3px 3.6px;border-color:#bac5d2 #d5dee9 #d8e1eb #b9c4d1;border-radius:4.5px;"></div>
<div class="t" style="position:absolute;left:495.5px;top:362.3px;height:20px;line-height:20px;font-family:'Liberation Sans', sans-serif;font-size:17px;color:#1e1a78;font-weight:700;white-space:pre;">160103025</div>
<div class="t" style="position:absolute;left:75.4px;top:412.8px;height:20px;line-height:20px;font-family:'Liberation Sans', sans-serif;font-size:17px;color:#222;font-weight:400;white-space:pre;">Emp</div>
<div class="t" style="position:absolute;left:134.4px;top:412.8px;height:20px;line-height:20px;font-family:'Liberation Sans', sans-serif;font-size:17px;color:#222;font-weight:400;white-space:pre;">Fil</div>
<div class="t" style="position:absolute;left:179.4px;top:412.8px;height:20px;line-height:20px;font-family:'Liberation Sans', sans-serif;font-size:17px;color:#222;font-weight:400;white-space:pre;">Div.</div>
<div class="t" style="position:absolute;left:230px;top:412.8px;height:20px;line-height:20px;font-family:'Liberation Sans', sans-serif;font-size:17px;color:#222;font-weight:400;white-space:pre;">Sec</div>
<div class="t" style="position:absolute;left:284.6px;top:412.8px;height:20px;line-height:20px;font-family:'Liberation Sans', sans-serif;font-size:17px;color:#222;font-weight:400;white-space:pre;">Solicitacao</div>
<div class="t" style="position:absolute;left:397px;top:412.8px;height:20px;line-height:20px;font-family:'Liberation Sans', sans-serif;font-size:17px;color:#222;font-weight:400;white-space:pre;">Material</div>
<div class="t" style="position:absolute;left:483.6px;top:412.8px;height:20px;line-height:20px;font-family:'Liberation Sans', sans-serif;font-size:17px;color:#222;font-weight:400;white-space:pre;">Un</div>
<div class="t" style="position:absolute;left:528px;top:412.8px;height:20px;line-height:20px;font-family:'Liberation Sans', sans-serif;font-size:17px;color:#222;font-weight:400;white-space:pre;">Tipo Natureza</div>
<div class="t" style="position:absolute;left:658px;top:412.8px;height:20px;line-height:20px;font-family:'Liberation Sans', sans-serif;font-size:17px;color:#222;font-weight:400;white-space:pre;">NaturezaOperação</div>
<div class="t" style="position:absolute;left:897px;top:412.8px;height:20px;line-height:20px;font-family:'Liberation Sans', sans-serif;font-size:17px;color:#222;font-weight:400;white-space:pre;">Qtd</div>
<div class="t" style="position:absolute;left:1008px;top:412.8px;height:20px;line-height:20px;font-family:'Liberation Sans', sans-serif;font-size:17px;color:#222;font-weight:400;white-space:pre;">Vlr Unit</div>
<div class="t" style="position:absolute;left:1140.7px;top:412.8px;height:20px;line-height:20px;font-family:'Liberation Sans', sans-serif;font-size:17px;color:#222;font-weight:400;white-space:pre;">Valor Pedido</div>
<div class="t" style="position:absolute;left:1270.3px;top:412.8px;height:20px;line-height:20px;font-family:'Liberation Sans', sans-serif;font-size:17px;color:#222;font-weight:400;white-space:pre;">% Desc</div>
<div style="position:absolute;left:66.4px;top:438.5px;width:50.5px;height:32.3px;box-sizing:border-box;background:#ffffc4;border-style:solid;border-width:3px 3px 3.3px 3.6px;border-color:#bac5d2 #d5dee9 #d8e1eb #b9c4d1;border-radius:4.5px;"></div>
<div style="position:absolute;left:117.9px;top:438.5px;width:50.0px;height:32.3px;box-sizing:border-box;background:#ffffc4;border-style:solid;border-width:3px 3px 3.3px 3.6px;border-color:#bac5d2 #d5dee9 #d8e1eb #b9c4d1;border-radius:4.5px;"></div>
<div style="position:absolute;left:169.2px;top:438.5px;width:50.5px;height:32.3px;box-sizing:border-box;background:#ffffc4;border-style:solid;border-width:3px 3px 3.3px 3.6px;border-color:#bac5d2 #d5dee9 #d8e1eb #b9c4d1;border-radius:4.5px;"></div>
<div class="t" style="position:absolute;left:-105.19999999999999px;width:600px;text-align:center;top:447.4px;height:20px;line-height:20px;font-family:'Liberation Sans', sans-serif;font-size:17px;color:#1e1a78;font-weight:700;white-space:pre;">6</div>
<div style="position:absolute;left:219.4px;top:438.5px;width:48.2px;height:32.3px;box-sizing:border-box;background:#ffffc4;border-style:solid;border-width:3px 3px 3.3px 3.6px;border-color:#bac5d2 #d5dee9 #d8e1eb #b9c4d1;border-radius:4.5px;"></div>
<div class="t" style="position:absolute;left:-56.150000000000006px;width:600px;text-align:center;top:447.4px;height:20px;line-height:20px;font-family:'Liberation Sans', sans-serif;font-size:17px;color:#1e1a78;font-weight:700;white-space:pre;">31</div>
<div style="position:absolute;left:271.3px;top:438.5px;width:110.2px;height:32.3px;box-sizing:border-box;background:#ffffc4;border-style:solid;border-width:3px 3px 3.3px 3.6px;border-color:#bac5d2 #d5dee9 #d8e1eb #b9c4d1;border-radius:4.5px;"></div>
<div class="t" style="position:absolute;left:26.75px;width:600px;text-align:center;top:447.4px;height:20px;line-height:20px;font-family:'Liberation Sans', sans-serif;font-size:17px;color:#1e1a78;font-weight:700;white-space:pre;">91868393</div>
<div style="position:absolute;left:383.7px;top:438.5px;width:85.6px;height:32.3px;box-sizing:border-box;background:#ffffc4;border-style:solid;border-width:3px 3px 3.3px 3.6px;border-color:#bac5d2 #d5dee9 #d8e1eb #b9c4d1;border-radius:4.5px;"></div>
<div class="t" style="position:absolute;left:126.85000000000002px;width:600px;text-align:center;top:447.4px;height:20px;line-height:20px;font-family:'Liberation Sans', sans-serif;font-size:17px;color:#1e1a78;font-weight:700;white-space:pre;">212397</div>
<div style="position:absolute;left:472.0px;top:438.5px;width:42.3px;height:32.3px;box-sizing:border-box;background:#ffffc4;border-style:solid;border-width:3px 3px 3.3px 3.6px;border-color:#bac5d2 #d5dee9 #d8e1eb #b9c4d1;border-radius:4.5px;"></div>
<div class="t" style="position:absolute;left:193.5px;width:600px;text-align:center;top:447.4px;height:20px;line-height:20px;font-family:'Liberation Sans', sans-serif;font-size:17px;color:#1e1a78;font-weight:700;white-space:pre;">12</div>
<div style="position:absolute;left:515.4px;top:438.5px;width:133.1px;height:32.3px;box-sizing:border-box;background:#ffffc4;border-style:solid;border-width:3px 3px 3.3px 3.6px;border-color:#bac5d2 #d5dee9 #d8e1eb #b9c4d1;border-radius:4.5px;"></div>
<div style="position:absolute;left:625.1px;top:442.3px;width:20.5px;height:27.5px;background:#eef0f4;border-radius:0 3px 3px 0"></div>
<svg style="position:absolute;left:628.1px;top:451.8px" width="14" height="9"><path d="M1 1 H13 L7 8Z" fill="#5c6478"/></svg>
<div class="t" style="position:absolute;left:524px;top:447.4px;height:20px;line-height:20px;font-family:'Liberation Sans', sans-serif;font-size:17px;color:#1e1a78;font-weight:700;white-space:pre;">Materia P...</div>
<div style="position:absolute;left:650.0px;top:438.5px;width:85.8px;height:32.3px;box-sizing:border-box;background:#ffffc4;border-style:solid;border-width:3px 3px 3.3px 3.6px;border-color:#bac5d2 #d5dee9 #d8e1eb #b9c4d1;border-radius:4.5px;"></div>
<div class="t" style="position:absolute;left:658.6px;top:447.4px;height:20px;line-height:20px;font-family:'Liberation Sans', sans-serif;font-size:17px;color:#1e1a78;font-weight:700;white-space:pre;">3949066</div>
<div style="position:absolute;left:736.4px;top:438.5px;width:55.2px;height:32.3px;box-sizing:border-box;background:#ffffc4;border-style:solid;border-width:3px 3px 3.3px 3.6px;border-color:#bac5d2 #d5dee9 #d8e1eb #b9c4d1;border-radius:4.5px;"></div>
<div class="t" style="position:absolute;left:464.35px;width:600px;text-align:center;top:447.4px;height:20px;line-height:20px;font-family:'Liberation Sans', sans-serif;font-size:17px;color:#1e1a78;font-weight:700;white-space:pre;">21</div>
<div style="position:absolute;left:792.9px;top:438.5px;width:53.5px;height:32.3px;box-sizing:border-box;background:#ffffc4;border-style:solid;border-width:3px 3px 3.3px 3.6px;border-color:#bac5d2 #d5dee9 #d8e1eb #b9c4d1;border-radius:4.5px;"></div>
<div class="t" style="position:absolute;left:520.0px;width:600px;text-align:center;top:447.4px;height:20px;line-height:20px;font-family:'Liberation Sans', sans-serif;font-size:17px;color:#1e1a78;font-weight:700;white-space:pre;">2</div>
<div style="position:absolute;left:849.2px;top:438.5px;width:119.5px;height:32.3px;box-sizing:border-box;background:#ffffc4;border-style:solid;border-width:3px 3px 3.3px 3.6px;border-color:#bac5d2 #d5dee9 #d8e1eb #b9c4d1;border-radius:4.5px;"></div>
<div class="t" style="position:absolute;left:363.29999999999995px;width:600px;text-align:right;top:447.4px;height:20px;line-height:20px;font-family:'Liberation Sans', sans-serif;font-size:17px;color:#1e1a78;font-weight:700;white-space:pre;">24,000.000</div>
<div style="position:absolute;left:968.2px;top:438.5px;width:134.1px;height:32.3px;box-sizing:border-box;background:#ffffc4;border-style:solid;border-width:3px 3px 3.3px 3.6px;border-color:#bac5d2 #d5dee9 #d8e1eb #b9c4d1;border-radius:4.5px;"></div>
<div class="t" style="position:absolute;left:496.9000000000001px;width:600px;text-align:right;top:447.4px;height:20px;line-height:20px;font-family:'Liberation Sans', sans-serif;font-size:17px;color:#1e1a78;font-weight:700;white-space:pre;">0.6300000</div>
<div style="position:absolute;left:1105.9px;top:438.5px;width:163.6px;height:32.3px;box-sizing:border-box;background:#ffffc4;border-style:solid;border-width:3px 3px 3.3px 3.6px;border-color:#bac5d2 #d5dee9 #d8e1eb #b9c4d1;border-radius:4.5px;"></div>
<div class="t" style="position:absolute;left:664.0999999999999px;width:600px;text-align:right;top:447.4px;height:20px;line-height:20px;font-family:'Liberation Sans', sans-serif;font-size:17px;color:#97a6b3;font-weight:700;white-space:pre;">15,120.0000</div>
<div style="position:absolute;left:1270.2px;top:438.5px;width:59.5px;height:32.3px;box-sizing:border-box;background:#ffffc4;border-style:solid;border-width:3px 3px 3.3px 3.6px;border-color:#bac5d2 #d5dee9 #d8e1eb #b9c4d1;border-radius:4.5px;"></div>
<div style="position:absolute;left:1333px;top:440.3px;width:28.5px;height:31px;background:#fefec4"></div>
<div style="position:absolute;left:1335px;top:443.3px;width:17px;height:17px;box-sizing:border-box;background:#fff;border:1px solid #7a7a7a;border-right-color:#ddd;border-bottom-color:#ddd"></div>
<div style="position:absolute;left:66.4px;top:472.9px;width:50.5px;height:32.3px;box-sizing:border-box;background:#ffffff;border-style:solid;border-width:3px 3px 3.3px 3.6px;border-color:#bac5d2 #d5dee9 #d8e1eb #b9c4d1;border-radius:4.5px;"></div>
<div style="position:absolute;left:117.9px;top:472.9px;width:50.0px;height:32.3px;box-sizing:border-box;background:#ffffff;border-style:solid;border-width:3px 3px 3.3px 3.6px;border-color:#bac5d2 #d5dee9 #d8e1eb #b9c4d1;border-radius:4.5px;"></div>
<div style="position:absolute;left:169.2px;top:472.9px;width:50.5px;height:32.3px;box-sizing:border-box;background:#ffffff;border-style:solid;border-width:3px 3px 3.3px 3.6px;border-color:#bac5d2 #d5dee9 #d8e1eb #b9c4d1;border-radius:4.5px;"></div>
<div style="position:absolute;left:219.4px;top:472.9px;width:48.2px;height:32.3px;box-sizing:border-box;background:#ffffff;border-style:solid;border-width:3px 3px 3.3px 3.6px;border-color:#bac5d2 #d5dee9 #d8e1eb #b9c4d1;border-radius:4.5px;"></div>
<div style="position:absolute;left:271.3px;top:472.9px;width:110.2px;height:32.3px;box-sizing:border-box;background:#ffffff;border-style:solid;border-width:3px 3px 3.3px 3.6px;border-color:#bac5d2 #d5dee9 #d8e1eb #b9c4d1;border-radius:4.5px;"></div>
<div style="position:absolute;left:383.7px;top:472.9px;width:85.6px;height:32.3px;box-sizing:border-box;background:#ffffff;border-style:solid;border-width:3px 3px 3.3px 3.6px;border-color:#bac5d2 #d5dee9 #d8e1eb #b9c4d1;border-radius:4.5px;"></div>
<div style="position:absolute;left:472.0px;top:472.9px;width:42.3px;height:32.3px;box-sizing:border-box;background:#ffffff;border-style:solid;border-width:3px 3px 3.3px 3.6px;border-color:#bac5d2 #d5dee9 #d8e1eb #b9c4d1;border-radius:4.5px;"></div>
<div style="position:absolute;left:515.4px;top:472.9px;width:133.1px;height:32.3px;box-sizing:border-box;background:#ffffff;border-style:solid;border-width:3px 3px 3.3px 3.6px;border-color:#bac5d2 #d5dee9 #d8e1eb #b9c4d1;border-radius:4.5px;"></div>
<div style="position:absolute;left:625.1px;top:476.7px;width:20.5px;height:27.5px;background:#eceef3;border-radius:0 3px 3px 0"></div>
<svg style="position:absolute;left:628.1px;top:486.2px" width="14" height="9"><path d="M1 1 H13 L7 8Z" fill="#c4c8d0"/></svg>
<div style="position:absolute;left:650.0px;top:472.9px;width:85.8px;height:32.3px;box-sizing:border-box;background:#ffffff;border-style:solid;border-width:3px 3px 3.3px 3.6px;border-color:#bac5d2 #d5dee9 #d8e1eb #b9c4d1;border-radius:4.5px;"></div>
<div style="position:absolute;left:736.4px;top:472.9px;width:55.2px;height:32.3px;box-sizing:border-box;background:#ffffff;border-style:solid;border-width:3px 3px 3.3px 3.6px;border-color:#bac5d2 #d5dee9 #d8e1eb #b9c4d1;border-radius:4.5px;"></div>
<div style="position:absolute;left:792.9px;top:472.9px;width:53.5px;height:32.3px;box-sizing:border-box;background:#ffffff;border-style:solid;border-width:3px 3px 3.3px 3.6px;border-color:#bac5d2 #d5dee9 #d8e1eb #b9c4d1;border-radius:4.5px;"></div>
<div style="position:absolute;left:849.2px;top:472.9px;width:119.5px;height:32.3px;box-sizing:border-box;background:#ffffff;border-style:solid;border-width:3px 3px 3.3px 3.6px;border-color:#bac5d2 #d5dee9 #d8e1eb #b9c4d1;border-radius:4.5px;"></div>
<div style="position:absolute;left:968.2px;top:472.9px;width:134.1px;height:32.3px;box-sizing:border-box;background:#ffffff;border-style:solid;border-width:3px 3px 3.3px 3.6px;border-color:#bac5d2 #d5dee9 #d8e1eb #b9c4d1;border-radius:4.5px;"></div>
<div style="position:absolute;left:1105.9px;top:472.9px;width:163.6px;height:32.3px;box-sizing:border-box;background:#ffffff;border-style:solid;border-width:3px 3px 3.3px 3.6px;border-color:#bac5d2 #d5dee9 #d8e1eb #b9c4d1;border-radius:4.5px;"></div>
<div style="position:absolute;left:1270.2px;top:472.9px;width:59.5px;height:32.3px;box-sizing:border-box;background:#ffffff;border-style:solid;border-width:3px 3px 3.3px 3.6px;border-color:#bac5d2 #d5dee9 #d8e1eb #b9c4d1;border-radius:4.5px;"></div>
<div style="position:absolute;left:1335px;top:481.7px;width:17.5px;height:17.5px;box-sizing:border-box;background:#e4e8ee;border:1px solid #c6ccd6;border-right:1.5px solid #b0b8c4;border-bottom:1.5px solid #b0b8c4"></div>
<div style="position:absolute;left:66.4px;top:507.2px;width:50.5px;height:32.3px;box-sizing:border-box;background:#ffffff;border-style:solid;border-width:3px 3px 3.3px 3.6px;border-color:#bac5d2 #d5dee9 #d8e1eb #b9c4d1;border-radius:4.5px;"></div>
<div style="position:absolute;left:117.9px;top:507.2px;width:50.0px;height:32.3px;box-sizing:border-box;background:#ffffff;border-style:solid;border-width:3px 3px 3.3px 3.6px;border-color:#bac5d2 #d5dee9 #d8e1eb #b9c4d1;border-radius:4.5px;"></div>
<div style="position:absolute;left:169.2px;top:507.2px;width:50.5px;height:32.3px;box-sizing:border-box;background:#ffffff;border-style:solid;border-width:3px 3px 3.3px 3.6px;border-color:#bac5d2 #d5dee9 #d8e1eb #b9c4d1;border-radius:4.5px;"></div>
<div style="position:absolute;left:219.4px;top:507.2px;width:48.2px;height:32.3px;box-sizing:border-box;background:#ffffff;border-style:solid;border-width:3px 3px 3.3px 3.6px;border-color:#bac5d2 #d5dee9 #d8e1eb #b9c4d1;border-radius:4.5px;"></div>
<div style="position:absolute;left:271.3px;top:507.2px;width:110.2px;height:32.3px;box-sizing:border-box;background:#ffffff;border-style:solid;border-width:3px 3px 3.3px 3.6px;border-color:#bac5d2 #d5dee9 #d8e1eb #b9c4d1;border-radius:4.5px;"></div>
<div style="position:absolute;left:383.7px;top:507.2px;width:85.6px;height:32.3px;box-sizing:border-box;background:#ffffff;border-style:solid;border-width:3px 3px 3.3px 3.6px;border-color:#bac5d2 #d5dee9 #d8e1eb #b9c4d1;border-radius:4.5px;"></div>
<div style="position:absolute;left:472.0px;top:507.2px;width:42.3px;height:32.3px;box-sizing:border-box;background:#ffffff;border-style:solid;border-width:3px 3px 3.3px 3.6px;border-color:#bac5d2 #d5dee9 #d8e1eb #b9c4d1;border-radius:4.5px;"></div>
<div style="position:absolute;left:515.4px;top:507.2px;width:133.1px;height:32.3px;box-sizing:border-box;background:#ffffff;border-style:solid;border-width:3px 3px 3.3px 3.6px;border-color:#bac5d2 #d5dee9 #d8e1eb #b9c4d1;border-radius:4.5px;"></div>
<div style="position:absolute;left:625.1px;top:511.0px;width:20.5px;height:27.5px;background:#eceef3;border-radius:0 3px 3px 0"></div>
<svg style="position:absolute;left:628.1px;top:520.5px" width="14" height="9"><path d="M1 1 H13 L7 8Z" fill="#c4c8d0"/></svg>
<div style="position:absolute;left:650.0px;top:507.2px;width:85.8px;height:32.3px;box-sizing:border-box;background:#ffffff;border-style:solid;border-width:3px 3px 3.3px 3.6px;border-color:#bac5d2 #d5dee9 #d8e1eb #b9c4d1;border-radius:4.5px;"></div>
<div style="position:absolute;left:736.4px;top:507.2px;width:55.2px;height:32.3px;box-sizing:border-box;background:#ffffff;border-style:solid;border-width:3px 3px 3.3px 3.6px;border-color:#bac5d2 #d5dee9 #d8e1eb #b9c4d1;border-radius:4.5px;"></div>
<div style="position:absolute;left:792.9px;top:507.2px;width:53.5px;height:32.3px;box-sizing:border-box;background:#ffffff;border-style:solid;border-width:3px 3px 3.3px 3.6px;border-color:#bac5d2 #d5dee9 #d8e1eb #b9c4d1;border-radius:4.5px;"></div>
<div style="position:absolute;left:849.2px;top:507.2px;width:119.5px;height:32.3px;box-sizing:border-box;background:#ffffff;border-style:solid;border-width:3px 3px 3.3px 3.6px;border-color:#bac5d2 #d5dee9 #d8e1eb #b9c4d1;border-radius:4.5px;"></div>
<div style="position:absolute;left:968.2px;top:507.2px;width:134.1px;height:32.3px;box-sizing:border-box;background:#ffffff;border-style:solid;border-width:3px 3px 3.3px 3.6px;border-color:#bac5d2 #d5dee9 #d8e1eb #b9c4d1;border-radius:4.5px;"></div>
<div style="position:absolute;left:1105.9px;top:507.2px;width:163.6px;height:32.3px;box-sizing:border-box;background:#ffffff;border-style:solid;border-width:3px 3px 3.3px 3.6px;border-color:#bac5d2 #d5dee9 #d8e1eb #b9c4d1;border-radius:4.5px;"></div>
<div style="position:absolute;left:1270.2px;top:507.2px;width:59.5px;height:32.3px;box-sizing:border-box;background:#ffffff;border-style:solid;border-width:3px 3px 3.3px 3.6px;border-color:#bac5d2 #d5dee9 #d8e1eb #b9c4d1;border-radius:4.5px;"></div>
<div style="position:absolute;left:1335px;top:516.0px;width:17.5px;height:17.5px;box-sizing:border-box;background:#e4e8ee;border:1px solid #c6ccd6;border-right:1.5px solid #b0b8c4;border-bottom:1.5px solid #b0b8c4"></div>
<div style="position:absolute;left:66.4px;top:541.6px;width:50.5px;height:32.3px;box-sizing:border-box;background:#ffffff;border-style:solid;border-width:3px 3px 3.3px 3.6px;border-color:#bac5d2 #d5dee9 #d8e1eb #b9c4d1;border-radius:4.5px;"></div>
<div style="position:absolute;left:117.9px;top:541.6px;width:50.0px;height:32.3px;box-sizing:border-box;background:#ffffff;border-style:solid;border-width:3px 3px 3.3px 3.6px;border-color:#bac5d2 #d5dee9 #d8e1eb #b9c4d1;border-radius:4.5px;"></div>
<div style="position:absolute;left:169.2px;top:541.6px;width:50.5px;height:32.3px;box-sizing:border-box;background:#ffffff;border-style:solid;border-width:3px 3px 3.3px 3.6px;border-color:#bac5d2 #d5dee9 #d8e1eb #b9c4d1;border-radius:4.5px;"></div>
<div style="position:absolute;left:219.4px;top:541.6px;width:48.2px;height:32.3px;box-sizing:border-box;background:#ffffff;border-style:solid;border-width:3px 3px 3.3px 3.6px;border-color:#bac5d2 #d5dee9 #d8e1eb #b9c4d1;border-radius:4.5px;"></div>
<div style="position:absolute;left:271.3px;top:541.6px;width:110.2px;height:32.3px;box-sizing:border-box;background:#ffffff;border-style:solid;border-width:3px 3px 3.3px 3.6px;border-color:#bac5d2 #d5dee9 #d8e1eb #b9c4d1;border-radius:4.5px;"></div>
<div style="position:absolute;left:383.7px;top:541.6px;width:85.6px;height:32.3px;box-sizing:border-box;background:#ffffff;border-style:solid;border-width:3px 3px 3.3px 3.6px;border-color:#bac5d2 #d5dee9 #d8e1eb #b9c4d1;border-radius:4.5px;"></div>
<div style="position:absolute;left:472.0px;top:541.6px;width:42.3px;height:32.3px;box-sizing:border-box;background:#ffffff;border-style:solid;border-width:3px 3px 3.3px 3.6px;border-color:#bac5d2 #d5dee9 #d8e1eb #b9c4d1;border-radius:4.5px;"></div>
<div style="position:absolute;left:515.4px;top:541.6px;width:133.1px;height:32.3px;box-sizing:border-box;background:#ffffff;border-style:solid;border-width:3px 3px 3.3px 3.6px;border-color:#bac5d2 #d5dee9 #d8e1eb #b9c4d1;border-radius:4.5px;"></div>
<div style="position:absolute;left:625.1px;top:545.4px;width:20.5px;height:27.5px;background:#eceef3;border-radius:0 3px 3px 0"></div>
<svg style="position:absolute;left:628.1px;top:554.9px" width="14" height="9"><path d="M1 1 H13 L7 8Z" fill="#c4c8d0"/></svg>
<div style="position:absolute;left:650.0px;top:541.6px;width:85.8px;height:32.3px;box-sizing:border-box;background:#ffffff;border-style:solid;border-width:3px 3px 3.3px 3.6px;border-color:#bac5d2 #d5dee9 #d8e1eb #b9c4d1;border-radius:4.5px;"></div>
<div style="position:absolute;left:736.4px;top:541.6px;width:55.2px;height:32.3px;box-sizing:border-box;background:#ffffff;border-style:solid;border-width:3px 3px 3.3px 3.6px;border-color:#bac5d2 #d5dee9 #d8e1eb #b9c4d1;border-radius:4.5px;"></div>
<div style="position:absolute;left:792.9px;top:541.6px;width:53.5px;height:32.3px;box-sizing:border-box;background:#ffffff;border-style:solid;border-width:3px 3px 3.3px 3.6px;border-color:#bac5d2 #d5dee9 #d8e1eb #b9c4d1;border-radius:4.5px;"></div>
<div style="position:absolute;left:849.2px;top:541.6px;width:119.5px;height:32.3px;box-sizing:border-box;background:#ffffff;border-style:solid;border-width:3px 3px 3.3px 3.6px;border-color:#bac5d2 #d5dee9 #d8e1eb #b9c4d1;border-radius:4.5px;"></div>
<div style="position:absolute;left:968.2px;top:541.6px;width:134.1px;height:32.3px;box-sizing:border-box;background:#ffffff;border-style:solid;border-width:3px 3px 3.3px 3.6px;border-color:#bac5d2 #d5dee9 #d8e1eb #b9c4d1;border-radius:4.5px;"></div>
<div style="position:absolute;left:1105.9px;top:541.6px;width:163.6px;height:32.3px;box-sizing:border-box;background:#ffffff;border-style:solid;border-width:3px 3px 3.3px 3.6px;border-color:#bac5d2 #d5dee9 #d8e1eb #b9c4d1;border-radius:4.5px;"></div>
<div style="position:absolute;left:1270.2px;top:541.6px;width:59.5px;height:32.3px;box-sizing:border-box;background:#ffffff;border-style:solid;border-width:3px 3px 3.3px 3.6px;border-color:#bac5d2 #d5dee9 #d8e1eb #b9c4d1;border-radius:4.5px;"></div>
<div style="position:absolute;left:1335px;top:550.4px;width:17.5px;height:17.5px;box-sizing:border-box;background:#e4e8ee;border:1px solid #c6ccd6;border-right:1.5px solid #b0b8c4;border-bottom:1.5px solid #b0b8c4"></div>
<div style="position:absolute;left:66.4px;top:576.0px;width:50.5px;height:32.3px;box-sizing:border-box;background:#ffffff;border-style:solid;border-width:3px 3px 3.3px 3.6px;border-color:#bac5d2 #d5dee9 #d8e1eb #b9c4d1;border-radius:4.5px;"></div>
<div style="position:absolute;left:117.9px;top:576.0px;width:50.0px;height:32.3px;box-sizing:border-box;background:#ffffff;border-style:solid;border-width:3px 3px 3.3px 3.6px;border-color:#bac5d2 #d5dee9 #d8e1eb #b9c4d1;border-radius:4.5px;"></div>
<div style="position:absolute;left:169.2px;top:576.0px;width:50.5px;height:32.3px;box-sizing:border-box;background:#ffffff;border-style:solid;border-width:3px 3px 3.3px 3.6px;border-color:#bac5d2 #d5dee9 #d8e1eb #b9c4d1;border-radius:4.5px;"></div>
<div style="position:absolute;left:219.4px;top:576.0px;width:48.2px;height:32.3px;box-sizing:border-box;background:#ffffff;border-style:solid;border-width:3px 3px 3.3px 3.6px;border-color:#bac5d2 #d5dee9 #d8e1eb #b9c4d1;border-radius:4.5px;"></div>
<div style="position:absolute;left:271.3px;top:576.0px;width:110.2px;height:32.3px;box-sizing:border-box;background:#ffffff;border-style:solid;border-width:3px 3px 3.3px 3.6px;border-color:#bac5d2 #d5dee9 #d8e1eb #b9c4d1;border-radius:4.5px;"></div>
<div style="position:absolute;left:383.7px;top:576.0px;width:85.6px;height:32.3px;box-sizing:border-box;background:#ffffff;border-style:solid;border-width:3px 3px 3.3px 3.6px;border-color:#bac5d2 #d5dee9 #d8e1eb #b9c4d1;border-radius:4.5px;"></div>
<div style="position:absolute;left:472.0px;top:576.0px;width:42.3px;height:32.3px;box-sizing:border-box;background:#ffffff;border-style:solid;border-width:3px 3px 3.3px 3.6px;border-color:#bac5d2 #d5dee9 #d8e1eb #b9c4d1;border-radius:4.5px;"></div>
<div style="position:absolute;left:515.4px;top:576.0px;width:133.1px;height:32.3px;box-sizing:border-box;background:#ffffff;border-style:solid;border-width:3px 3px 3.3px 3.6px;border-color:#bac5d2 #d5dee9 #d8e1eb #b9c4d1;border-radius:4.5px;"></div>
<div style="position:absolute;left:625.1px;top:579.8px;width:20.5px;height:27.5px;background:#eceef3;border-radius:0 3px 3px 0"></div>
<svg style="position:absolute;left:628.1px;top:589.3px" width="14" height="9"><path d="M1 1 H13 L7 8Z" fill="#c4c8d0"/></svg>
<div style="position:absolute;left:650.0px;top:576.0px;width:85.8px;height:32.3px;box-sizing:border-box;background:#ffffff;border-style:solid;border-width:3px 3px 3.3px 3.6px;border-color:#bac5d2 #d5dee9 #d8e1eb #b9c4d1;border-radius:4.5px;"></div>
<div style="position:absolute;left:736.4px;top:576.0px;width:55.2px;height:32.3px;box-sizing:border-box;background:#ffffff;border-style:solid;border-width:3px 3px 3.3px 3.6px;border-color:#bac5d2 #d5dee9 #d8e1eb #b9c4d1;border-radius:4.5px;"></div>
<div style="position:absolute;left:792.9px;top:576.0px;width:53.5px;height:32.3px;box-sizing:border-box;background:#ffffff;border-style:solid;border-width:3px 3px 3.3px 3.6px;border-color:#bac5d2 #d5dee9 #d8e1eb #b9c4d1;border-radius:4.5px;"></div>
<div style="position:absolute;left:849.2px;top:576.0px;width:119.5px;height:32.3px;box-sizing:border-box;background:#ffffff;border-style:solid;border-width:3px 3px 3.3px 3.6px;border-color:#bac5d2 #d5dee9 #d8e1eb #b9c4d1;border-radius:4.5px;"></div>
<div style="position:absolute;left:968.2px;top:576.0px;width:134.1px;height:32.3px;box-sizing:border-box;background:#ffffff;border-style:solid;border-width:3px 3px 3.3px 3.6px;border-color:#bac5d2 #d5dee9 #d8e1eb #b9c4d1;border-radius:4.5px;"></div>
<div style="position:absolute;left:1105.9px;top:576.0px;width:163.6px;height:32.3px;box-sizing:border-box;background:#ffffff;border-style:solid;border-width:3px 3px 3.3px 3.6px;border-color:#bac5d2 #d5dee9 #d8e1eb #b9c4d1;border-radius:4.5px;"></div>
<div style="position:absolute;left:1270.2px;top:576.0px;width:59.5px;height:32.3px;box-sizing:border-box;background:#ffffff;border-style:solid;border-width:3px 3px 3.3px 3.6px;border-color:#bac5d2 #d5dee9 #d8e1eb #b9c4d1;border-radius:4.5px;"></div>
<div style="position:absolute;left:1335px;top:584.8px;width:17.5px;height:17.5px;box-sizing:border-box;background:#e4e8ee;border:1px solid #c6ccd6;border-right:1.5px solid #b0b8c4;border-bottom:1.5px solid #b0b8c4"></div>
<div style="position:absolute;left:66.4px;top:610.3px;width:50.5px;height:32.3px;box-sizing:border-box;background:#ffffff;border-style:solid;border-width:3px 3px 3.3px 3.6px;border-color:#bac5d2 #d5dee9 #d8e1eb #b9c4d1;border-radius:4.5px;"></div>
<div style="position:absolute;left:117.9px;top:610.3px;width:50.0px;height:32.3px;box-sizing:border-box;background:#ffffff;border-style:solid;border-width:3px 3px 3.3px 3.6px;border-color:#bac5d2 #d5dee9 #d8e1eb #b9c4d1;border-radius:4.5px;"></div>
<div style="position:absolute;left:169.2px;top:610.3px;width:50.5px;height:32.3px;box-sizing:border-box;background:#ffffff;border-style:solid;border-width:3px 3px 3.3px 3.6px;border-color:#bac5d2 #d5dee9 #d8e1eb #b9c4d1;border-radius:4.5px;"></div>
<div style="position:absolute;left:219.4px;top:610.3px;width:48.2px;height:32.3px;box-sizing:border-box;background:#ffffff;border-style:solid;border-width:3px 3px 3.3px 3.6px;border-color:#bac5d2 #d5dee9 #d8e1eb #b9c4d1;border-radius:4.5px;"></div>
<div style="position:absolute;left:271.3px;top:610.3px;width:110.2px;height:32.3px;box-sizing:border-box;background:#ffffff;border-style:solid;border-width:3px 3px 3.3px 3.6px;border-color:#bac5d2 #d5dee9 #d8e1eb #b9c4d1;border-radius:4.5px;"></div>
<div style="position:absolute;left:383.7px;top:610.3px;width:85.6px;height:32.3px;box-sizing:border-box;background:#ffffff;border-style:solid;border-width:3px 3px 3.3px 3.6px;border-color:#bac5d2 #d5dee9 #d8e1eb #b9c4d1;border-radius:4.5px;"></div>
<div style="position:absolute;left:472.0px;top:610.3px;width:42.3px;height:32.3px;box-sizing:border-box;background:#ffffff;border-style:solid;border-width:3px 3px 3.3px 3.6px;border-color:#bac5d2 #d5dee9 #d8e1eb #b9c4d1;border-radius:4.5px;"></div>
<div style="position:absolute;left:515.4px;top:610.3px;width:133.1px;height:32.3px;box-sizing:border-box;background:#ffffff;border-style:solid;border-width:3px 3px 3.3px 3.6px;border-color:#bac5d2 #d5dee9 #d8e1eb #b9c4d1;border-radius:4.5px;"></div>
<div style="position:absolute;left:625.1px;top:614.1px;width:20.5px;height:27.5px;background:#eceef3;border-radius:0 3px 3px 0"></div>
<svg style="position:absolute;left:628.1px;top:623.6px" width="14" height="9"><path d="M1 1 H13 L7 8Z" fill="#c4c8d0"/></svg>
<div style="position:absolute;left:650.0px;top:610.3px;width:85.8px;height:32.3px;box-sizing:border-box;background:#ffffff;border-style:solid;border-width:3px 3px 3.3px 3.6px;border-color:#bac5d2 #d5dee9 #d8e1eb #b9c4d1;border-radius:4.5px;"></div>
<div style="position:absolute;left:736.4px;top:610.3px;width:55.2px;height:32.3px;box-sizing:border-box;background:#ffffff;border-style:solid;border-width:3px 3px 3.3px 3.6px;border-color:#bac5d2 #d5dee9 #d8e1eb #b9c4d1;border-radius:4.5px;"></div>
<div style="position:absolute;left:792.9px;top:610.3px;width:53.5px;height:32.3px;box-sizing:border-box;background:#ffffff;border-style:solid;border-width:3px 3px 3.3px 3.6px;border-color:#bac5d2 #d5dee9 #d8e1eb #b9c4d1;border-radius:4.5px;"></div>
<div style="position:absolute;left:849.2px;top:610.3px;width:119.5px;height:32.3px;box-sizing:border-box;background:#ffffff;border-style:solid;border-width:3px 3px 3.3px 3.6px;border-color:#bac5d2 #d5dee9 #d8e1eb #b9c4d1;border-radius:4.5px;"></div>
<div style="position:absolute;left:968.2px;top:610.3px;width:134.1px;height:32.3px;box-sizing:border-box;background:#ffffff;border-style:solid;border-width:3px 3px 3.3px 3.6px;border-color:#bac5d2 #d5dee9 #d8e1eb #b9c4d1;border-radius:4.5px;"></div>
<div style="position:absolute;left:1105.9px;top:610.3px;width:163.6px;height:32.3px;box-sizing:border-box;background:#ffffff;border-style:solid;border-width:3px 3px 3.3px 3.6px;border-color:#bac5d2 #d5dee9 #d8e1eb #b9c4d1;border-radius:4.5px;"></div>
<div style="position:absolute;left:1270.2px;top:610.3px;width:59.5px;height:32.3px;box-sizing:border-box;background:#ffffff;border-style:solid;border-width:3px 3px 3.3px 3.6px;border-color:#bac5d2 #d5dee9 #d8e1eb #b9c4d1;border-radius:4.5px;"></div>
<div style="position:absolute;left:1335px;top:619.1px;width:17.5px;height:17.5px;box-sizing:border-box;background:#e4e8ee;border:1px solid #c6ccd6;border-right:1.5px solid #b0b8c4;border-bottom:1.5px solid #b0b8c4"></div>
<div style="position:absolute;left:66.4px;top:644.7px;width:50.5px;height:32.3px;box-sizing:border-box;background:#ffffff;border-style:solid;border-width:3px 3px 3.3px 3.6px;border-color:#bac5d2 #d5dee9 #d8e1eb #b9c4d1;border-radius:4.5px;"></div>
<div style="position:absolute;left:117.9px;top:644.7px;width:50.0px;height:32.3px;box-sizing:border-box;background:#ffffff;border-style:solid;border-width:3px 3px 3.3px 3.6px;border-color:#bac5d2 #d5dee9 #d8e1eb #b9c4d1;border-radius:4.5px;"></div>
<div style="position:absolute;left:169.2px;top:644.7px;width:50.5px;height:32.3px;box-sizing:border-box;background:#ffffff;border-style:solid;border-width:3px 3px 3.3px 3.6px;border-color:#bac5d2 #d5dee9 #d8e1eb #b9c4d1;border-radius:4.5px;"></div>
<div style="position:absolute;left:219.4px;top:644.7px;width:48.2px;height:32.3px;box-sizing:border-box;background:#ffffff;border-style:solid;border-width:3px 3px 3.3px 3.6px;border-color:#bac5d2 #d5dee9 #d8e1eb #b9c4d1;border-radius:4.5px;"></div>
<div style="position:absolute;left:271.3px;top:644.7px;width:110.2px;height:32.3px;box-sizing:border-box;background:#ffffff;border-style:solid;border-width:3px 3px 3.3px 3.6px;border-color:#bac5d2 #d5dee9 #d8e1eb #b9c4d1;border-radius:4.5px;"></div>
<div style="position:absolute;left:383.7px;top:644.7px;width:85.6px;height:32.3px;box-sizing:border-box;background:#ffffff;border-style:solid;border-width:3px 3px 3.3px 3.6px;border-color:#bac5d2 #d5dee9 #d8e1eb #b9c4d1;border-radius:4.5px;"></div>
<div style="position:absolute;left:472.0px;top:644.7px;width:42.3px;height:32.3px;box-sizing:border-box;background:#ffffff;border-style:solid;border-width:3px 3px 3.3px 3.6px;border-color:#bac5d2 #d5dee9 #d8e1eb #b9c4d1;border-radius:4.5px;"></div>
<div style="position:absolute;left:515.4px;top:644.7px;width:133.1px;height:32.3px;box-sizing:border-box;background:#ffffff;border-style:solid;border-width:3px 3px 3.3px 3.6px;border-color:#bac5d2 #d5dee9 #d8e1eb #b9c4d1;border-radius:4.5px;"></div>
<div style="position:absolute;left:625.1px;top:648.5px;width:20.5px;height:27.5px;background:#eceef3;border-radius:0 3px 3px 0"></div>
<svg style="position:absolute;left:628.1px;top:658.0px" width="14" height="9"><path d="M1 1 H13 L7 8Z" fill="#c4c8d0"/></svg>
<div style="position:absolute;left:650.0px;top:644.7px;width:85.8px;height:32.3px;box-sizing:border-box;background:#ffffff;border-style:solid;border-width:3px 3px 3.3px 3.6px;border-color:#bac5d2 #d5dee9 #d8e1eb #b9c4d1;border-radius:4.5px;"></div>
<div style="position:absolute;left:736.4px;top:644.7px;width:55.2px;height:32.3px;box-sizing:border-box;background:#ffffff;border-style:solid;border-width:3px 3px 3.3px 3.6px;border-color:#bac5d2 #d5dee9 #d8e1eb #b9c4d1;border-radius:4.5px;"></div>
<div style="position:absolute;left:792.9px;top:644.7px;width:53.5px;height:32.3px;box-sizing:border-box;background:#ffffff;border-style:solid;border-width:3px 3px 3.3px 3.6px;border-color:#bac5d2 #d5dee9 #d8e1eb #b9c4d1;border-radius:4.5px;"></div>
<div style="position:absolute;left:849.2px;top:644.7px;width:119.5px;height:32.3px;box-sizing:border-box;background:#ffffff;border-style:solid;border-width:3px 3px 3.3px 3.6px;border-color:#bac5d2 #d5dee9 #d8e1eb #b9c4d1;border-radius:4.5px;"></div>
<div style="position:absolute;left:968.2px;top:644.7px;width:134.1px;height:32.3px;box-sizing:border-box;background:#ffffff;border-style:solid;border-width:3px 3px 3.3px 3.6px;border-color:#bac5d2 #d5dee9 #d8e1eb #b9c4d1;border-radius:4.5px;"></div>
<div style="position:absolute;left:1105.9px;top:644.7px;width:163.6px;height:32.3px;box-sizing:border-box;background:#ffffff;border-style:solid;border-width:3px 3px 3.3px 3.6px;border-color:#bac5d2 #d5dee9 #d8e1eb #b9c4d1;border-radius:4.5px;"></div>
<div style="position:absolute;left:1270.2px;top:644.7px;width:59.5px;height:32.3px;box-sizing:border-box;background:#ffffff;border-style:solid;border-width:3px 3px 3.3px 3.6px;border-color:#bac5d2 #d5dee9 #d8e1eb #b9c4d1;border-radius:4.5px;"></div>
<div style="position:absolute;left:1335px;top:653.5px;width:17.5px;height:17.5px;box-sizing:border-box;background:#e4e8ee;border:1px solid #c6ccd6;border-right:1.5px solid #b0b8c4;border-bottom:1.5px solid #b0b8c4"></div>
<div style="position:absolute;left:66.4px;top:679.1px;width:50.5px;height:32.3px;box-sizing:border-box;background:#ffffff;border-style:solid;border-width:3px 3px 3.3px 3.6px;border-color:#bac5d2 #d5dee9 #d8e1eb #b9c4d1;border-radius:4.5px;"></div>
<div style="position:absolute;left:117.9px;top:679.1px;width:50.0px;height:32.3px;box-sizing:border-box;background:#ffffff;border-style:solid;border-width:3px 3px 3.3px 3.6px;border-color:#bac5d2 #d5dee9 #d8e1eb #b9c4d1;border-radius:4.5px;"></div>
<div style="position:absolute;left:169.2px;top:679.1px;width:50.5px;height:32.3px;box-sizing:border-box;background:#ffffff;border-style:solid;border-width:3px 3px 3.3px 3.6px;border-color:#bac5d2 #d5dee9 #d8e1eb #b9c4d1;border-radius:4.5px;"></div>
<div style="position:absolute;left:219.4px;top:679.1px;width:48.2px;height:32.3px;box-sizing:border-box;background:#ffffff;border-style:solid;border-width:3px 3px 3.3px 3.6px;border-color:#bac5d2 #d5dee9 #d8e1eb #b9c4d1;border-radius:4.5px;"></div>
<div style="position:absolute;left:271.3px;top:679.1px;width:110.2px;height:32.3px;box-sizing:border-box;background:#ffffff;border-style:solid;border-width:3px 3px 3.3px 3.6px;border-color:#bac5d2 #d5dee9 #d8e1eb #b9c4d1;border-radius:4.5px;"></div>
<div style="position:absolute;left:383.7px;top:679.1px;width:85.6px;height:32.3px;box-sizing:border-box;background:#ffffff;border-style:solid;border-width:3px 3px 3.3px 3.6px;border-color:#bac5d2 #d5dee9 #d8e1eb #b9c4d1;border-radius:4.5px;"></div>
<div style="position:absolute;left:472.0px;top:679.1px;width:42.3px;height:32.3px;box-sizing:border-box;background:#ffffff;border-style:solid;border-width:3px 3px 3.3px 3.6px;border-color:#bac5d2 #d5dee9 #d8e1eb #b9c4d1;border-radius:4.5px;"></div>
<div style="position:absolute;left:515.4px;top:679.1px;width:133.1px;height:32.3px;box-sizing:border-box;background:#ffffff;border-style:solid;border-width:3px 3px 3.3px 3.6px;border-color:#bac5d2 #d5dee9 #d8e1eb #b9c4d1;border-radius:4.5px;"></div>
<div style="position:absolute;left:625.1px;top:682.9px;width:20.5px;height:27.5px;background:#eceef3;border-radius:0 3px 3px 0"></div>
<svg style="position:absolute;left:628.1px;top:692.4px" width="14" height="9"><path d="M1 1 H13 L7 8Z" fill="#c4c8d0"/></svg>
<div style="position:absolute;left:650.0px;top:679.1px;width:85.8px;height:32.3px;box-sizing:border-box;background:#ffffff;border-style:solid;border-width:3px 3px 3.3px 3.6px;border-color:#bac5d2 #d5dee9 #d8e1eb #b9c4d1;border-radius:4.5px;"></div>
<div style="position:absolute;left:736.4px;top:679.1px;width:55.2px;height:32.3px;box-sizing:border-box;background:#ffffff;border-style:solid;border-width:3px 3px 3.3px 3.6px;border-color:#bac5d2 #d5dee9 #d8e1eb #b9c4d1;border-radius:4.5px;"></div>
<div style="position:absolute;left:792.9px;top:679.1px;width:53.5px;height:32.3px;box-sizing:border-box;background:#ffffff;border-style:solid;border-width:3px 3px 3.3px 3.6px;border-color:#bac5d2 #d5dee9 #d8e1eb #b9c4d1;border-radius:4.5px;"></div>
<div style="position:absolute;left:849.2px;top:679.1px;width:119.5px;height:32.3px;box-sizing:border-box;background:#ffffff;border-style:solid;border-width:3px 3px 3.3px 3.6px;border-color:#bac5d2 #d5dee9 #d8e1eb #b9c4d1;border-radius:4.5px;"></div>
<div style="position:absolute;left:968.2px;top:679.1px;width:134.1px;height:32.3px;box-sizing:border-box;background:#ffffff;border-style:solid;border-width:3px 3px 3.3px 3.6px;border-color:#bac5d2 #d5dee9 #d8e1eb #b9c4d1;border-radius:4.5px;"></div>
<div style="position:absolute;left:1105.9px;top:679.1px;width:163.6px;height:32.3px;box-sizing:border-box;background:#ffffff;border-style:solid;border-width:3px 3px 3.3px 3.6px;border-color:#bac5d2 #d5dee9 #d8e1eb #b9c4d1;border-radius:4.5px;"></div>
<div style="position:absolute;left:1270.2px;top:679.1px;width:59.5px;height:32.3px;box-sizing:border-box;background:#ffffff;border-style:solid;border-width:3px 3px 3.3px 3.6px;border-color:#bac5d2 #d5dee9 #d8e1eb #b9c4d1;border-radius:4.5px;"></div>
<div style="position:absolute;left:1335px;top:687.9px;width:17.5px;height:17.5px;box-sizing:border-box;background:#e4e8ee;border:1px solid #c6ccd6;border-right:1.5px solid #b0b8c4;border-bottom:1.5px solid #b0b8c4"></div>
<div style="position:absolute;left:66.4px;top:713.5px;width:50.5px;height:32.3px;box-sizing:border-box;background:#ffffff;border-style:solid;border-width:3px 3px 3.3px 3.6px;border-color:#bac5d2 #d5dee9 #d8e1eb #b9c4d1;border-radius:4.5px;"></div>
<div style="position:absolute;left:117.9px;top:713.5px;width:50.0px;height:32.3px;box-sizing:border-box;background:#ffffff;border-style:solid;border-width:3px 3px 3.3px 3.6px;border-color:#bac5d2 #d5dee9 #d8e1eb #b9c4d1;border-radius:4.5px;"></div>
<div style="position:absolute;left:169.2px;top:713.5px;width:50.5px;height:32.3px;box-sizing:border-box;background:#ffffff;border-style:solid;border-width:3px 3px 3.3px 3.6px;border-color:#bac5d2 #d5dee9 #d8e1eb #b9c4d1;border-radius:4.5px;"></div>
<div style="position:absolute;left:219.4px;top:713.5px;width:48.2px;height:32.3px;box-sizing:border-box;background:#ffffff;border-style:solid;border-width:3px 3px 3.3px 3.6px;border-color:#bac5d2 #d5dee9 #d8e1eb #b9c4d1;border-radius:4.5px;"></div>
<div style="position:absolute;left:271.3px;top:713.5px;width:110.2px;height:32.3px;box-sizing:border-box;background:#ffffff;border-style:solid;border-width:3px 3px 3.3px 3.6px;border-color:#bac5d2 #d5dee9 #d8e1eb #b9c4d1;border-radius:4.5px;"></div>
<div style="position:absolute;left:383.7px;top:713.5px;width:85.6px;height:32.3px;box-sizing:border-box;background:#ffffff;border-style:solid;border-width:3px 3px 3.3px 3.6px;border-color:#bac5d2 #d5dee9 #d8e1eb #b9c4d1;border-radius:4.5px;"></div>
<div style="position:absolute;left:472.0px;top:713.5px;width:42.3px;height:32.3px;box-sizing:border-box;background:#ffffff;border-style:solid;border-width:3px 3px 3.3px 3.6px;border-color:#bac5d2 #d5dee9 #d8e1eb #b9c4d1;border-radius:4.5px;"></div>
<div style="position:absolute;left:515.4px;top:713.5px;width:133.1px;height:32.3px;box-sizing:border-box;background:#ffffff;border-style:solid;border-width:3px 3px 3.3px 3.6px;border-color:#bac5d2 #d5dee9 #d8e1eb #b9c4d1;border-radius:4.5px;"></div>
<div style="position:absolute;left:625.1px;top:717.3px;width:20.5px;height:27.5px;background:#eceef3;border-radius:0 3px 3px 0"></div>
<svg style="position:absolute;left:628.1px;top:726.8px" width="14" height="9"><path d="M1 1 H13 L7 8Z" fill="#c4c8d0"/></svg>
<div style="position:absolute;left:650.0px;top:713.5px;width:85.8px;height:32.3px;box-sizing:border-box;background:#ffffff;border-style:solid;border-width:3px 3px 3.3px 3.6px;border-color:#bac5d2 #d5dee9 #d8e1eb #b9c4d1;border-radius:4.5px;"></div>
<div style="position:absolute;left:736.4px;top:713.5px;width:55.2px;height:32.3px;box-sizing:border-box;background:#ffffff;border-style:solid;border-width:3px 3px 3.3px 3.6px;border-color:#bac5d2 #d5dee9 #d8e1eb #b9c4d1;border-radius:4.5px;"></div>
<div style="position:absolute;left:792.9px;top:713.5px;width:53.5px;height:32.3px;box-sizing:border-box;background:#ffffff;border-style:solid;border-width:3px 3px 3.3px 3.6px;border-color:#bac5d2 #d5dee9 #d8e1eb #b9c4d1;border-radius:4.5px;"></div>
<div style="position:absolute;left:849.2px;top:713.5px;width:119.5px;height:32.3px;box-sizing:border-box;background:#ffffff;border-style:solid;border-width:3px 3px 3.3px 3.6px;border-color:#bac5d2 #d5dee9 #d8e1eb #b9c4d1;border-radius:4.5px;"></div>
<div style="position:absolute;left:968.2px;top:713.5px;width:134.1px;height:32.3px;box-sizing:border-box;background:#ffffff;border-style:solid;border-width:3px 3px 3.3px 3.6px;border-color:#bac5d2 #d5dee9 #d8e1eb #b9c4d1;border-radius:4.5px;"></div>
<div style="position:absolute;left:1105.9px;top:713.5px;width:163.6px;height:32.3px;box-sizing:border-box;background:#ffffff;border-style:solid;border-width:3px 3px 3.3px 3.6px;border-color:#bac5d2 #d5dee9 #d8e1eb #b9c4d1;border-radius:4.5px;"></div>
<div style="position:absolute;left:1270.2px;top:713.5px;width:59.5px;height:32.3px;box-sizing:border-box;background:#ffffff;border-style:solid;border-width:3px 3px 3.3px 3.6px;border-color:#bac5d2 #d5dee9 #d8e1eb #b9c4d1;border-radius:4.5px;"></div>
<div style="position:absolute;left:1335px;top:722.3px;width:17.5px;height:17.5px;box-sizing:border-box;background:#e4e8ee;border:1px solid #c6ccd6;border-right:1.5px solid #b0b8c4;border-bottom:1.5px solid #b0b8c4"></div>
<div style="position:absolute;left:66.4px;top:747.8px;width:50.5px;height:32.3px;box-sizing:border-box;background:#ffffff;border-style:solid;border-width:3px 3px 3.3px 3.6px;border-color:#bac5d2 #d5dee9 #d8e1eb #b9c4d1;border-radius:4.5px;"></div>
<div style="position:absolute;left:117.9px;top:747.8px;width:50.0px;height:32.3px;box-sizing:border-box;background:#ffffff;border-style:solid;border-width:3px 3px 3.3px 3.6px;border-color:#bac5d2 #d5dee9 #d8e1eb #b9c4d1;border-radius:4.5px;"></div>
<div style="position:absolute;left:169.2px;top:747.8px;width:50.5px;height:32.3px;box-sizing:border-box;background:#ffffff;border-style:solid;border-width:3px 3px 3.3px 3.6px;border-color:#bac5d2 #d5dee9 #d8e1eb #b9c4d1;border-radius:4.5px;"></div>
<div style="position:absolute;left:219.4px;top:747.8px;width:48.2px;height:32.3px;box-sizing:border-box;background:#ffffff;border-style:solid;border-width:3px 3px 3.3px 3.6px;border-color:#bac5d2 #d5dee9 #d8e1eb #b9c4d1;border-radius:4.5px;"></div>
<div style="position:absolute;left:271.3px;top:747.8px;width:110.2px;height:32.3px;box-sizing:border-box;background:#ffffff;border-style:solid;border-width:3px 3px 3.3px 3.6px;border-color:#bac5d2 #d5dee9 #d8e1eb #b9c4d1;border-radius:4.5px;"></div>
<div style="position:absolute;left:383.7px;top:747.8px;width:85.6px;height:32.3px;box-sizing:border-box;background:#ffffff;border-style:solid;border-width:3px 3px 3.3px 3.6px;border-color:#bac5d2 #d5dee9 #d8e1eb #b9c4d1;border-radius:4.5px;"></div>
<div style="position:absolute;left:472.0px;top:747.8px;width:42.3px;height:32.3px;box-sizing:border-box;background:#ffffff;border-style:solid;border-width:3px 3px 3.3px 3.6px;border-color:#bac5d2 #d5dee9 #d8e1eb #b9c4d1;border-radius:4.5px;"></div>
<div style="position:absolute;left:515.4px;top:747.8px;width:133.1px;height:32.3px;box-sizing:border-box;background:#ffffff;border-style:solid;border-width:3px 3px 3.3px 3.6px;border-color:#bac5d2 #d5dee9 #d8e1eb #b9c4d1;border-radius:4.5px;"></div>
<div style="position:absolute;left:625.1px;top:751.6px;width:20.5px;height:27.5px;background:#eceef3;border-radius:0 3px 3px 0"></div>
<svg style="position:absolute;left:628.1px;top:761.1px" width="14" height="9"><path d="M1 1 H13 L7 8Z" fill="#c4c8d0"/></svg>
<div style="position:absolute;left:650.0px;top:747.8px;width:85.8px;height:32.3px;box-sizing:border-box;background:#ffffff;border-style:solid;border-width:3px 3px 3.3px 3.6px;border-color:#bac5d2 #d5dee9 #d8e1eb #b9c4d1;border-radius:4.5px;"></div>
<div style="position:absolute;left:736.4px;top:747.8px;width:55.2px;height:32.3px;box-sizing:border-box;background:#ffffff;border-style:solid;border-width:3px 3px 3.3px 3.6px;border-color:#bac5d2 #d5dee9 #d8e1eb #b9c4d1;border-radius:4.5px;"></div>
<div style="position:absolute;left:792.9px;top:747.8px;width:53.5px;height:32.3px;box-sizing:border-box;background:#ffffff;border-style:solid;border-width:3px 3px 3.3px 3.6px;border-color:#bac5d2 #d5dee9 #d8e1eb #b9c4d1;border-radius:4.5px;"></div>
<div style="position:absolute;left:849.2px;top:747.8px;width:119.5px;height:32.3px;box-sizing:border-box;background:#ffffff;border-style:solid;border-width:3px 3px 3.3px 3.6px;border-color:#bac5d2 #d5dee9 #d8e1eb #b9c4d1;border-radius:4.5px;"></div>
<div style="position:absolute;left:968.2px;top:747.8px;width:134.1px;height:32.3px;box-sizing:border-box;background:#ffffff;border-style:solid;border-width:3px 3px 3.3px 3.6px;border-color:#bac5d2 #d5dee9 #d8e1eb #b9c4d1;border-radius:4.5px;"></div>
<div style="position:absolute;left:1105.9px;top:747.8px;width:163.6px;height:32.3px;box-sizing:border-box;background:#ffffff;border-style:solid;border-width:3px 3px 3.3px 3.6px;border-color:#bac5d2 #d5dee9 #d8e1eb #b9c4d1;border-radius:4.5px;"></div>
<div style="position:absolute;left:1270.2px;top:747.8px;width:59.5px;height:32.3px;box-sizing:border-box;background:#ffffff;border-style:solid;border-width:3px 3px 3.3px 3.6px;border-color:#bac5d2 #d5dee9 #d8e1eb #b9c4d1;border-radius:4.5px;"></div>
<div style="position:absolute;left:1335px;top:756.6px;width:17.5px;height:17.5px;box-sizing:border-box;background:#e4e8ee;border:1px solid #c6ccd6;border-right:1.5px solid #b0b8c4;border-bottom:1.5px solid #b0b8c4"></div>
<div style="position:absolute;left:1333px;top:405.5px;width:28.5px;height:30px;background:#fefec4"></div>
<div style="position:absolute;left:1335px;top:410.5px;width:17px;height:17px;box-sizing:border-box;background:#fff;border:1px solid #7a7a7a;border-right-color:#ddd;border-bottom-color:#ddd"></div>
<div style="position:absolute;left:35px;top:455px;width:21px;height:320px;background:#e8ecf4;box-shadow:inset 2px 0 0 #f4f6fa, inset -1px 0 0 #dde3ec"></div>
<div style="position:absolute;left:33.7px;top:441px;width:23.4px;height:23px;box-sizing:border-box;background:#e8ecf4;border:1.5px solid #d0dcea;border-bottom:none;border-radius:11px 11px 0 0"></div>
<div style="position:absolute;left:36.5px;top:463px;width:19.5px;height:1.8px;background:#a2a8b8"></div>
<div style="position:absolute;left:33.4px;top:762px;width:24px;height:24px;box-sizing:border-box;background:#e8ecf4;border:1.5px solid #d0dcea;border-top:none;border-radius:0 0 12px 12px"></div>
<div style="position:absolute;left:36px;top:760.7px;width:20px;height:1.7px;background:#a9bccf"></div>
<svg style="position:absolute;left:39.5px;top:449.5px" width="12" height="8"><path d="M0.3 7.3 H11.7 L6 0.3Z" fill="#6c7286"/></svg>
<svg style="position:absolute;left:39.8px;top:770px" width="12" height="8"><path d="M0.3 0.4 H11.5 L5.9 7Z" fill="#6c7286"/></svg>
<svg style="position:absolute;left:36px;top:560px" width="20" height="92"><path d="M14 8.1 L16.6 5.5" stroke="#fff" stroke-width="1.2"/><path d="M13.6 8.5 L16 6.1" stroke="#8a9cb4" stroke-width="1.4"/><path d="M14 21.200000000000003 L16.6 18.6" stroke="#fff" stroke-width="1.2"/><path d="M13.6 21.6 L16 19.200000000000003" stroke="#8a9cb4" stroke-width="1.4"/><path d="M14 34.300000000000004 L16.6 31.700000000000003" stroke="#fff" stroke-width="1.2"/><path d="M13.6 34.7 L16 32.300000000000004" stroke="#8a9cb4" stroke-width="1.4"/><path d="M14 47.4 L16.6 44.8" stroke="#fff" stroke-width="1.2"/><path d="M13.6 47.8 L16 45.4" stroke="#8a9cb4" stroke-width="1.4"/><path d="M14 60.5 L16.6 57.9" stroke="#fff" stroke-width="1.2"/><path d="M13.6 60.9 L16 58.5" stroke="#8a9cb4" stroke-width="1.4"/><path d="M14 73.6 L16.6 71.0" stroke="#fff" stroke-width="1.2"/><path d="M13.6 74.0 L16 71.6" stroke="#8a9cb4" stroke-width="1.4"/><path d="M14 86.69999999999999 L16.6 84.1" stroke="#fff" stroke-width="1.2"/><path d="M13.6 87.1 L16 84.69999999999999" stroke="#8a9cb4" stroke-width="1.4"/><path d="M6 14.9 L8.6 12.3" stroke="#fff" stroke-width="1.2"/><path d="M5.6 15.3 L8 12.9" stroke="#8a9cb4" stroke-width="1.4"/><path d="M6 28.0 L8.6 25.4" stroke="#fff" stroke-width="1.2"/><path d="M5.6 28.4 L8 26.0" stroke="#8a9cb4" stroke-width="1.4"/><path d="M6 41.1 L8.6 38.5" stroke="#fff" stroke-width="1.2"/><path d="M5.6 41.5 L8 39.1" stroke="#8a9cb4" stroke-width="1.4"/><path d="M6 54.199999999999996 L8.6 51.599999999999994" stroke="#fff" stroke-width="1.2"/><path d="M5.6 54.599999999999994 L8 52.199999999999996" stroke="#8a9cb4" stroke-width="1.4"/><path d="M6 67.3 L8.6 64.7" stroke="#fff" stroke-width="1.2"/><path d="M5.6 67.7 L8 65.3" stroke="#8a9cb4" stroke-width="1.4"/><path d="M6 80.39999999999999 L8.6 77.8" stroke="#fff" stroke-width="1.2"/><path d="M5.6 80.8 L8 78.39999999999999" stroke="#8a9cb4" stroke-width="1.4"/></svg>
<div class="t" style="position:absolute;left:-430.5px;width:600px;text-align:right;top:797.3px;height:20px;line-height:20px;font-family:'Liberation Sans', sans-serif;font-size:17px;color:#222;font-weight:400;white-space:pre;">Material</div>
<div style="position:absolute;left:175.4px;top:787.5px;width:835.2px;height:34.6px;box-sizing:border-box;background:#ffffc4;border-style:solid;border-width:3px 3px 3.3px 3.6px;border-color:#bac5d2 #d5dee9 #d8e1eb #b9c4d1;border-radius:4.5px;"></div>
<div class="t" style="position:absolute;left:-430.5px;width:600px;text-align:right;top:835.8px;height:20px;line-height:20px;font-family:'Liberation Sans', sans-serif;font-size:17px;color:#222;font-weight:400;white-space:pre;">Unidade</div>
<div style="position:absolute;left:175.4px;top:826.2px;width:333.3px;height:35.6px;box-sizing:border-box;background:#ffffc4;border-style:solid;border-width:3px 3px 3.3px 3.6px;border-color:#bac5d2 #d5dee9 #d8e1eb #b9c4d1;border-radius:4.5px;"></div>
<div class="t" style="position:absolute;left:181.5px;top:836.3px;height:20px;line-height:20px;font-family:'Liberation Sans', sans-serif;font-size:17px;color:#1e1a78;font-weight:700;white-space:pre;">QUILOGRAMA</div>
<div class="t" style="position:absolute;left:-430.5px;width:600px;text-align:right;top:872.8px;height:20px;line-height:20px;font-family:'Liberation Sans', sans-serif;font-size:17px;color:#222;font-weight:400;white-space:pre;">Natureza</div>
<div style="position:absolute;left:175.4px;top:864.7px;width:333.3px;height:33.6px;box-sizing:border-box;background:#ffffc4;border-style:solid;border-width:3px 3px 3.3px 3.6px;border-color:#bac5d2 #d5dee9 #d8e1eb #b9c4d1;border-radius:4.5px;"></div>
<div class="t" style="position:absolute;left:594.8px;top:872.8px;height:20px;line-height:20px;font-family:'Liberation Sans', sans-serif;font-size:17px;color:#222;font-weight:400;white-space:pre;">Operação</div>
<div style="position:absolute;left:678.1px;top:863.8px;width:332.5px;height:34.2px;box-sizing:border-box;background:#ffffc4;border-style:solid;border-width:3px 3px 3.3px 3.6px;border-color:#bac5d2 #d5dee9 #d8e1eb #b9c4d1;border-radius:4.5px;"></div>
<div class="t" style="position:absolute;left:503.29999999999995px;width:600px;text-align:right;top:796.3px;height:20px;line-height:20px;font-family:'Liberation Sans', sans-serif;font-size:17px;color:#222;font-weight:400;white-space:pre;">Total</div>
<div style="position:absolute;left:1108.6px;top:786.6px;width:161.0px;height:34.0px;box-sizing:border-box;background:#ffffc4;border-style:solid;border-width:3px 3px 3.3px 3.6px;border-color:#bac5d2 #d5dee9 #d8e1eb #b9c4d1;border-radius:4.5px;"></div>
<div class="t" style="position:absolute;left:664.5px;width:600px;text-align:right;top:796.3px;height:20px;line-height:20px;font-family:'Liberation Sans', sans-serif;font-size:17px;color:#1e1a78;font-weight:700;white-space:pre;">15,120.0000</div>
<div class="t" style="position:absolute;left:503.29999999999995px;width:600px;text-align:right;top:835.8px;height:20px;line-height:20px;font-family:'Liberation Sans', sans-serif;font-size:17px;color:#222;font-weight:400;white-space:pre;">Total Sel.</div>
<div style="position:absolute;left:1108.6px;top:826.2px;width:161.0px;height:34.6px;box-sizing:border-box;background:#ffffc4;border-style:solid;border-width:3px 3px 3.3px 3.6px;border-color:#bac5d2 #d5dee9 #d8e1eb #b9c4d1;border-radius:4.5px;"></div>
<div style="position:absolute;left:1315px;top:808.5px;width:38px;height:38.5px;box-sizing:border-box;border-radius:4px;border-top:1.5px solid #b3b3b3;border-left:1.5px solid #b3b3b3;border-right:2px solid #8aa3c2;border-bottom:2px solid #8aa3c2;"></div>
<svg style="position:absolute;left:1318px;top:811.5px" width="32" height="32" viewBox="0 0 32 32"><path d="M1.5 21.5 L10 29 L31.5 1.5" fill="none" stroke="#000" stroke-width="3.2" stroke-linejoin="round" stroke-linecap="round"/><path d="M2 22 L10 28.5 L22 12" fill="none" stroke="#000" stroke-width="5" stroke-linejoin="round" stroke-linecap="round"/></svg>
<div style="position:absolute;left:1315px;top:876.5px;width:38px;height:38.5px;box-sizing:border-box;border-radius:4px;border-top:1.5px solid #b3b3b3;border-left:1.5px solid #b3b3b3;border-right:2px solid #8aa3c2;border-bottom:2px solid #8aa3c2;"></div>
<svg style="position:absolute;left:1318px;top:879.5px" width="32" height="32" viewBox="0 0 32 32"><rect x="3.8" y="3" width="18" height="22.5" fill="#d8d8d8" stroke="#111" stroke-width="1.8"/><rect x="15.5" y="4" width="4.5" height="19" fill="#f4f4f4"/><path d="M4.5 3.8 H15.5 V21.5 L12 23 L8 23.5 L6 25 H4.5Z" fill="#ff0000"/><circle cx="13" cy="10" r="1" fill="#ff9900"/><path d="M2.5 8.8 h2 M2.5 15 h2" stroke="#ee0" stroke-width="1.4"/><rect x="4" y="26.3" width="17" height="1.4" fill="#eee"/></svg>
</body></html>
